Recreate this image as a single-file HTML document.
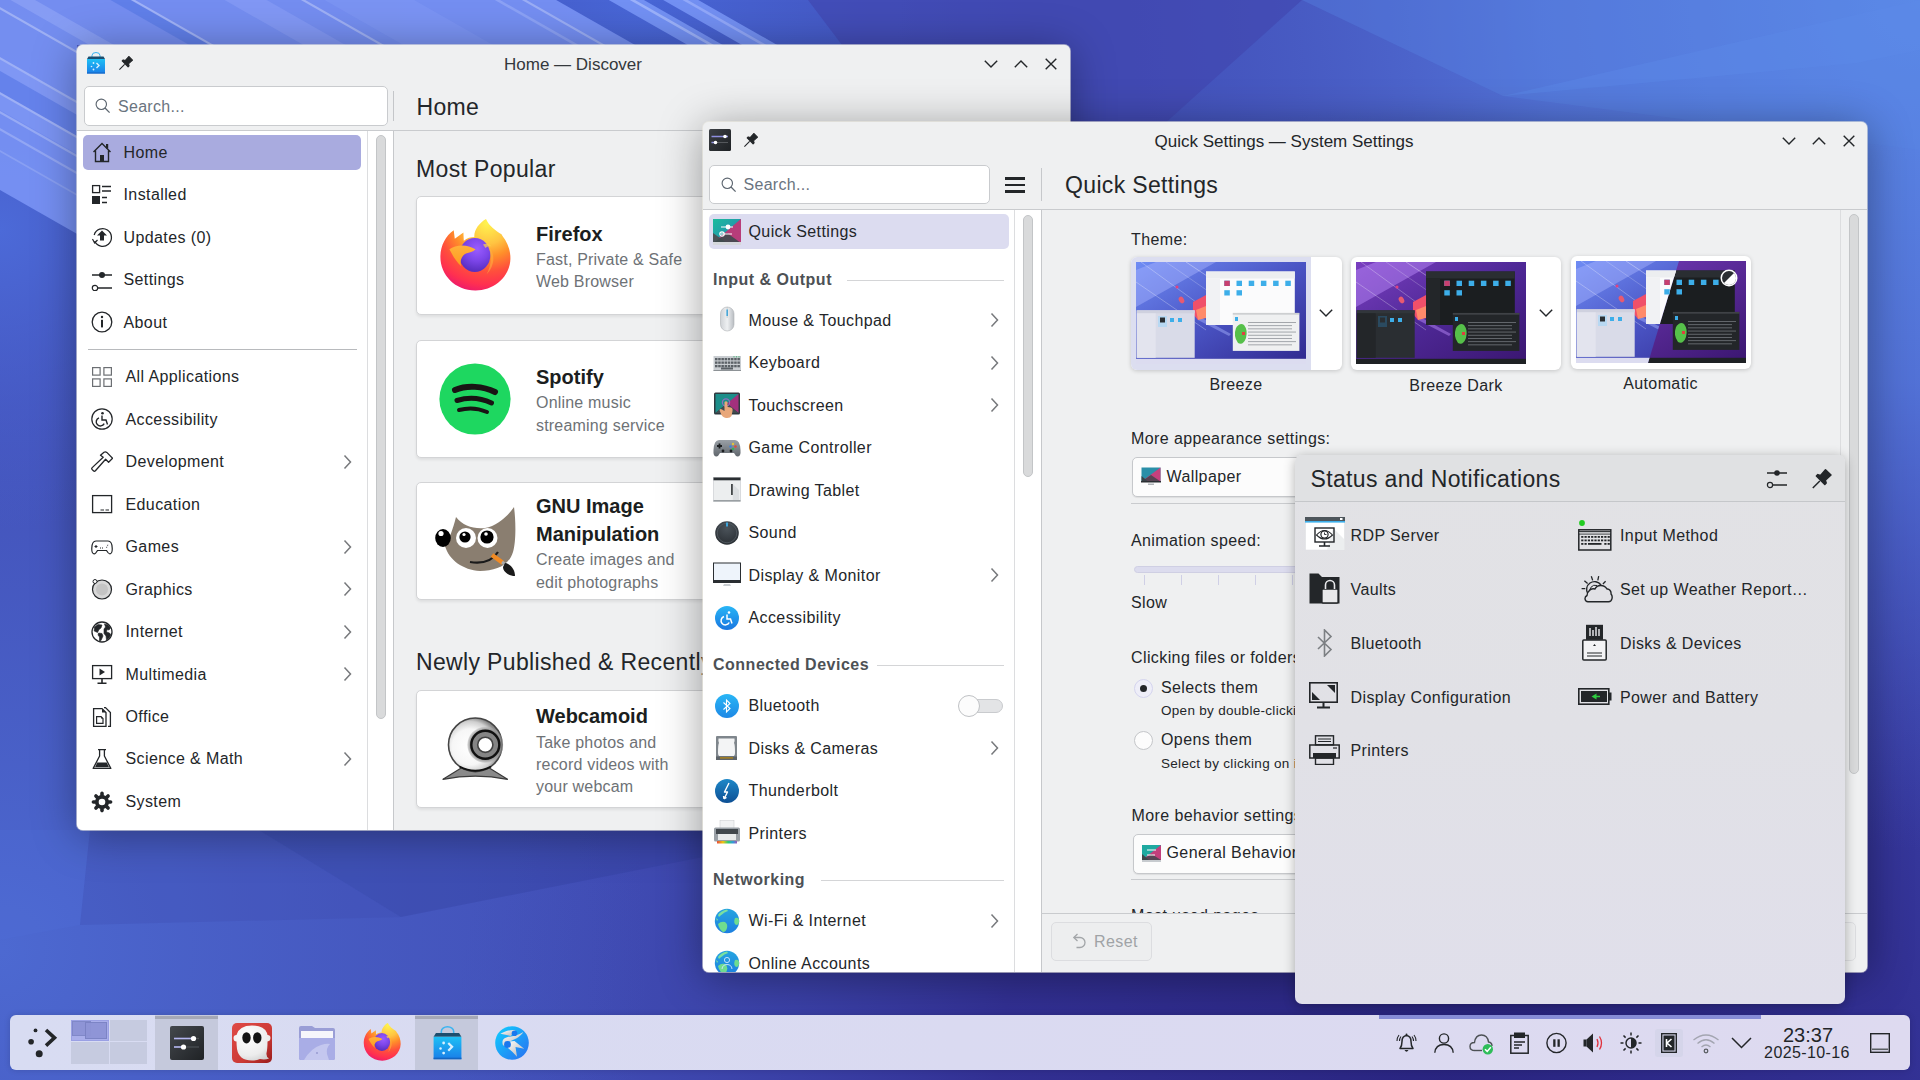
<!DOCTYPE html><html><head><meta charset="utf-8"><title>KDE</title><style>
*{box-sizing:border-box;margin:0;padding:0}
html,body{width:1920px;height:1080px;overflow:hidden}
body{position:relative;font-family:"Liberation Sans",sans-serif;color:#232629;background:#4a5cc8;-webkit-font-smoothing:antialiased}
.a{position:absolute}
.t{position:absolute;white-space:nowrap;line-height:1}
.clip{position:absolute;left:0;top:0;width:1920px;height:1080px}
</style></head><body>
<svg class="a" style="left:0;top:0" width="1920" height="1080" viewBox="0 0 1920 1080">
<defs>
<radialGradient id="wml" cx="0" cy="230" r="300" gradientUnits="userSpaceOnUse"><stop offset="0" stop-color="#4c6ad8"/><stop offset="1" stop-color="#4a62d0" stop-opacity="0"/></radialGradient>
<radialGradient id="wtm" cx="640" cy="0" r="420" gradientUnits="userSpaceOnUse"><stop offset="0" stop-color="#4866d6"/><stop offset="1" stop-color="#4660d0" stop-opacity="0"/></radialGradient>
<radialGradient id="wtr" cx="1920" cy="0" r="850" gradientUnits="userSpaceOnUse">
<stop offset="0" stop-color="#5c8ae8"/><stop offset="0.45" stop-color="#5578dc" stop-opacity="0.85"/><stop offset="1" stop-color="#4a5cc8" stop-opacity="0"/></radialGradient>
<radialGradient id="wbr" cx="1450" cy="1100" r="1000" gradientUnits="userSpaceOnUse">
<stop offset="0" stop-color="#29247f"/><stop offset="0.45" stop-color="#302c8e" stop-opacity="0.9"/><stop offset="1" stop-color="#3a3ea6" stop-opacity="0"/></radialGradient>
<radialGradient id="wbl" cx="0" cy="950" r="650" gradientUnits="userSpaceOnUse">
<stop offset="0" stop-color="#4e6cd4" stop-opacity="0.9"/><stop offset="1" stop-color="#4a62c8" stop-opacity="0"/></radialGradient>
<clipPath id="wclip"><polygon points="0,0 808,0 842,45 77,45 77,300 0,300"/></clipPath>
</defs>
<rect width="1920" height="1080" fill="#4250b8"/>
<rect width="1920" height="1080" fill="url(#wbr)"/>
<rect width="1920" height="1080" fill="url(#wtr)"/>
<rect width="1920" height="1080" fill="url(#wbl)"/>
<rect width="1920" height="1080" fill="url(#wml)"/>
<rect width="1920" height="1080" fill="url(#wtm)"/>
<polygon points="780,0 1302,0 1163,125 1069,125 1069,45 842,45 808,0" fill="#4145ae" opacity="0.6"/><polygon points="1302,0 1920,0 1920,150 1503,96" fill="#5a86e4" opacity="0.35"/>
<polygon points="1503,96 1920,0 1920,50 1857,63" fill="#5c8ae8" opacity="0.4"/>
<polygon points="90,830 259,830 401,917 80,925" fill="#3a48ac" opacity="0.25"/><polygon points="259,830 703,830 703,857 401,917" fill="#2f3a98" opacity="0.3"/><polygon points="0,830 90,830 80,925 0,940" fill="#4e6cd8" opacity="0.3"/>
<g clip-path="url(#wclip)"><polygon points="-100,-374.0 1300,424.0 1300,931.0 -100,133.0" fill="#7892f4" opacity="0.92"/><polygon points="-100,-50.0 1300,748.0 1300,750.5 -100,-47.5" fill="#ffffff" opacity="0.3"/><polygon points="-100,-77.0 1300,721.0 1300,735.0 -100,-63.0" fill="#b0c0ff" opacity="0.3"/><polygon points="-100,-132.0 1300,666.0 1300,678.0 -100,-120.0" fill="#4a6ee0" opacity="0.45"/><polygon points="-100,-134.0 1300,664.0 1300,666.5 -100,-131.5" fill="#d8e0ff" opacity="0.45"/><polygon points="-100,-209.0 1300,589.0 1300,613.0 -100,-185.0" fill="#a8b8ff" opacity="0.25"/><polygon points="-100,-231.0 1300,567.0 1300,569.5 -100,-228.5" fill="#ffffff" opacity="0.3"/><polygon points="-100,-293.0 1300,505.0 1300,556.0 -100,-242.0" fill="#a0b4ff" opacity="0.15"/><polygon points="-100,-357.0 1300,441.0 1300,443.5 -100,-354.5" fill="#ffffff" opacity="0.28"/><polygon points="-100,-342.0 1300,456.0 1300,459.0 -100,-339.0" fill="#c0ccff" opacity="0.3"/><polygon points="-100,-424.0 1300,374.0 1300,394.0 -100,-404.0" fill="#7a98f8" opacity="0.85"/><polygon points="-100,-419.0 1300,379.0 1300,382.0 -100,-416.0" fill="#b8c8ff" opacity="0.6"/><polygon points="-100,-455.0 1300,343.0 1300,363.0 -100,-435.0" fill="#7a98f8" opacity="0.85"/><polygon points="-100,-449.0 1300,349.0 1300,352.0 -100,-446.0" fill="#b0c0ff" opacity="0.5"/><polygon points="-100,0.0 1300,798.0 1300,800.5 -100,2.5" fill="#ffffff" opacity="0.3"/><polygon points="-100,2.0 1300,800.0 1300,812.0 -100,14.0" fill="#a0b4ff" opacity="0.25"/><polygon points="-100,14.0 1300,812.0 1300,833.0 -100,35.0" fill="#4a6ee0" opacity="0.35"/><polygon points="-100,35.0 1300,833.0 1300,835.5 -100,37.5" fill="#ffffff" opacity="0.3"/><polygon points="-100,37.0 1300,835.0 1300,851.0 -100,53.0" fill="#9ab0ff" opacity="0.2"/><polygon points="-100,54.0 1300,852.0 1300,854.5 -100,56.5" fill="#ffffff" opacity="0.25"/><polygon points="-100,71.0 1300,869.0 1300,871.5 -100,73.5" fill="#ffffff" opacity="0.22"/><polygon points="-100,93.0 1300,891.0 1300,893.0 -100,95.0" fill="#ffffff" opacity="0.15"/></g>
</svg>
<div class="a" style="left:77px;top:45px;width:993px;height:785px;border-radius:6px;box-shadow:0 0 0 1px rgba(240,238,228,.55),0 5px 44px rgba(0,0,0,.36);background:#eff0f1"></div><div class="clip" style="clip-path:inset(45px 850px 250px 77px round 6px)"><div class="a" style="left:77px;top:45px;width:993px;height:785px;background:#eff0f1"></div><svg class="a" style="left:86px;top:52px;" width="20" height="22" viewBox="0 0 20 22"><defs><linearGradient id="dg" x1="0" y1="0" x2="0" y2="1"><stop offset="0" stop-color="#1ec0f5"/><stop offset="1" stop-color="#1a7ee8"/></linearGradient></defs>
<path d="M6 6 V3.5 A4 3 0 0 1 14 3.5 V6" fill="none" stroke="#3db4f0" stroke-width="1"/>
<path d="M2.5 4.5 H17.5 L19 7 H1 Z" fill="#1d4e6e"/>
<rect x="1" y="7" width="18" height="14.5" fill="url(#dg)"/><rect x="1" y="20.5" width="18" height="1" fill="#1565c0"/>
<path d="M10.5 11 L13 13.5 L10.5 16" fill="none" stroke="#d8f0ff" stroke-width="1.4"/><circle cx="7.5" cy="11" r="0.9" fill="#d8f0ff"/><circle cx="5.5" cy="14.5" r="0.8" fill="#d8f0ff"/><circle cx="7.5" cy="17.5" r="0.9" fill="#d8f0ff"/></svg><svg class="a" style="left:119px;top:56px;" width="14" height="14" viewBox="0 0 14 14"><path d="M13.5 4.2 L9.8 0.5 L6.2 4.6 L4.2 3.9 L3.2 4.9 L9.1 10.8 L10.1 9.8 L9.4 7.8 Z M5.6 8.4 L0.4 13.6" fill="#232629" stroke="#232629" stroke-width="1.1" stroke-linejoin="round"/></svg><div class="t" style="left:73.0px;width:1000px;text-align:center;top:56.0px;font-size:17px;color:#34383c;font-weight:400;">Home — Discover</div><svg class="a" style="left:984px;top:59.5px;" width="14" height="8" viewBox="0 0 14 8"><path d="M0.8 0.8 L7 7 L13.2 0.8" fill="none" stroke="#232629" stroke-width="1.4"/></svg><svg class="a" style="left:1014px;top:59.5px;" width="14" height="8" viewBox="0 0 14 8"><path d="M0.8 7.2 L7 1 L13.2 7.2" fill="none" stroke="#232629" stroke-width="1.4"/></svg><svg class="a" style="left:1045px;top:57.5px;" width="12" height="12" viewBox="0 0 12 12"><path d="M0.7 0.7 L11.3 11.3 M11.3 0.7 L0.7 11.3" fill="none" stroke="#232629" stroke-width="1.4"/></svg><div class="a" style="left:83.5px;top:86px;width:304.5px;height:40px;background:#fff;border:1px solid #c9cbce;border-radius:5px"></div><svg class="a" style="left:95px;top:98.0px;" width="16" height="16" viewBox="0 0 16 16"><circle cx="6.3" cy="6.3" r="5.2" fill="none" stroke="#5d6670" stroke-width="1.15"/><path d="M10 10 L14.6 14.6" stroke="#5d6670" stroke-width="1.3"/></svg><div class="t" style="left:118.0px;top:99.4px;font-size:16px;color:#6a7480;font-weight:400;letter-spacing:0.3px;">Search...</div><div class="a" style="left:393px;top:91px;width:1px;height:30px;background:#c4c6c9"></div><div class="t" style="left:416.5px;top:95.5px;font-size:23px;color:#232629;font-weight:400;letter-spacing:0.35px;">Home</div><div class="a" style="left:77px;top:130px;width:993px;height:1px;background:#c9cbce"></div><div class="a" style="left:77px;top:131px;width:316px;height:699px;background:#fff"></div><div class="a" style="left:367px;top:131px;width:1px;height:699px;background:#dcdddf"></div><div class="a" style="left:376px;top:135px;width:10px;height:584px;background:#d9dadb;border:1px solid #c3c5c7;border-radius:5px"></div><div class="a" style="left:393px;top:131px;width:1px;height:699px;background:#c6c8cb"></div><div class="a" style="left:83px;top:135px;width:278px;height:35px;background:#a9abdf;border-radius:5px"></div><svg class="a" style="left:91px;top:141.3px;" width="22" height="22" viewBox="0 0 22 22"><path d="M2.5 11 L11 2.5 L19.5 11 M4.5 9.5 V20.5 H17.5 V9.5" fill="none" stroke="#232629" stroke-width="1.4" stroke-linejoin="miter"/><rect x="9" y="14" width="4" height="6.5" fill="#232629"/><rect x="15" y="3" width="2.2" height="4.5" fill="#232629"/></svg><div class="t" style="left:123.5px;top:144.7px;font-size:16px;color:#232629;font-weight:400;letter-spacing:0.4px;">Home</div><svg class="a" style="left:91px;top:183.8px;" width="22" height="22" viewBox="0 0 22 22"><rect x="1.6" y="1.6" width="7" height="7" fill="none" stroke="#232629" stroke-width="1.3"/><rect x="1" y="12" width="8" height="8" fill="#232629"/><path d="M11 2.5 H20 M11 7 H20 M11 13.5 H16 M11 18.5 H16" stroke="#232629" stroke-width="1.3"/></svg><div class="t" style="left:123.5px;top:187.2px;font-size:16px;color:#232629;font-weight:400;letter-spacing:0.4px;">Installed</div><svg class="a" style="left:91px;top:226.3px;" width="22" height="22" viewBox="0 0 22 22"><path d="M3.2 9 A8.8 8.8 0 1 1 3.6 15" fill="none" stroke="#232629" stroke-width="1.3"/><path d="M1.5 13 L3.6 17 L6.5 14" fill="none" stroke="#232629" stroke-width="1.2"/><path d="M11 4.5 L16 9.5 H13 V14.5 H9 V9.5 H6 Z" fill="#232629"/></svg><div class="t" style="left:123.5px;top:229.7px;font-size:16px;color:#232629;font-weight:400;letter-spacing:0.4px;">Updates (0)</div><svg class="a" style="left:91px;top:268.8px;" width="22" height="22" viewBox="0 0 22 22"><path d="M1 6 H21 M6 19 H21" stroke="#232629" stroke-width="1.4"/><circle cx="11" cy="6" r="3" fill="#232629"/><circle cx="4" cy="19" r="2.7" fill="#fff" stroke="#232629" stroke-width="1.2"/></svg><div class="t" style="left:123.5px;top:272.2px;font-size:16px;color:#232629;font-weight:400;letter-spacing:0.4px;">Settings</div><svg class="a" style="left:91px;top:311.3px;" width="22" height="22" viewBox="0 0 22 22"><circle cx="11" cy="11" r="9.8" fill="none" stroke="#232629" stroke-width="1.3"/><circle cx="11" cy="6" r="1.2" fill="#232629"/><rect x="10" y="8.8" width="2" height="7.6" fill="#232629"/></svg><div class="t" style="left:123.5px;top:314.7px;font-size:16px;color:#232629;font-weight:400;letter-spacing:0.4px;">About</div><div class="a" style="left:88px;top:349px;width:269px;height:1px;background:#b8babd"></div><svg class="a" style="left:91px;top:366.0px;" width="22" height="22" viewBox="0 0 22 22"><rect x="1.6" y="1.6" width="7.5" height="7.5" fill="none" stroke="#6c6f73" stroke-width="1.2"/><rect x="12.9" y="1.6" width="7.5" height="7.5" fill="none" stroke="#6c6f73" stroke-width="1.2"/><rect x="1.6" y="12.9" width="7.5" height="7.5" fill="none" stroke="#6c6f73" stroke-width="1.2"/><rect x="12.9" y="12.9" width="7.5" height="7.5" fill="none" stroke="#6c6f73" stroke-width="1.2"/></svg><div class="t" style="left:125.5px;top:369.4px;font-size:16px;color:#232629;font-weight:400;letter-spacing:0.4px;">All Applications</div><svg class="a" style="left:91px;top:408.45px;" width="22" height="22" viewBox="0 0 22 22"><circle cx="11" cy="11" r="10.2" fill="none" stroke="#232629" stroke-width="1.2"/><circle cx="11.5" cy="5.2" r="1.3" fill="#232629"/><path d="M11 7.5 V12 H15 L16.5 16.5 M8 9.8 A4.2 4.2 0 1 0 13.2 15.6" fill="none" stroke="#232629" stroke-width="1.4"/></svg><div class="t" style="left:125.5px;top:411.8px;font-size:16px;color:#232629;font-weight:400;letter-spacing:0.4px;">Accessibility</div><svg class="a" style="left:91px;top:450.9px;" width="22" height="22" viewBox="0 0 22 22"><path d="M9.5 4.2 L13 1.2 Q14.5 0.3 15.8 1.4 L21.6 7.2 L17.6 11.2 L14.6 8.2 L4.4 19.8 Q3.4 20.8 2.4 19.8 L1.2 18.6 Q0.2 17.6 1.2 16.6 L12.2 6.2 Z" fill="none" stroke="#232629" stroke-width="1.3" stroke-linejoin="round"/></svg><div class="t" style="left:125.5px;top:454.3px;font-size:16px;color:#232629;font-weight:400;letter-spacing:0.4px;">Development</div><svg class="a" style="left:342px;top:453.9px;" width="10" height="16" viewBox="0 0 10 16"><path d="M2.5 1.5 L8.5 8 L2.5 14.5" fill="none" stroke="#77797c" stroke-width="1.5"/></svg><svg class="a" style="left:91px;top:493.35px;" width="22" height="22" viewBox="0 0 22 22"><rect x="1.6" y="2.6" width="19" height="17" fill="none" stroke="#232629" stroke-width="1.3"/><path d="M9.5 17 H13 M14.5 17 H18" stroke="#232629" stroke-width="1.2"/></svg><div class="t" style="left:125.5px;top:496.8px;font-size:16px;color:#232629;font-weight:400;letter-spacing:0.4px;">Education</div><svg class="a" style="left:91px;top:535.8px;" width="22" height="22" viewBox="0 0 22 22"><path d="M5 5 H17 Q21 5 21.2 12 Q21.5 17.5 19 17.8 Q17.5 18 15.5 14.5 H6.5 Q4.5 18 3 17.8 Q0.5 17.5 0.8 12 Q1 5 5 5 Z" fill="none" stroke="#232629" stroke-width="1.2"/><path d="M5 9 V12 M3.5 10.5 H6.5 M16.5 9 L17 9.5 M15.5 11 L16 11.5" stroke="#232629" stroke-width="1.1"/><path d="M9 12 H13" stroke="#232629" stroke-width="1" stroke-dasharray="1 1"/></svg><div class="t" style="left:125.5px;top:539.2px;font-size:16px;color:#232629;font-weight:400;letter-spacing:0.4px;">Games</div><svg class="a" style="left:342px;top:538.8px;" width="10" height="16" viewBox="0 0 10 16"><path d="M2.5 1.5 L8.5 8 L2.5 14.5" fill="none" stroke="#77797c" stroke-width="1.5"/></svg><svg class="a" style="left:91px;top:578.25px;" width="22" height="22" viewBox="0 0 22 22"><circle cx="11" cy="11.5" r="9.5" fill="#d8d8d8" stroke="#232629" stroke-width="1.2"/><circle cx="11" cy="11.5" r="6" fill="#c4c4c4"/><circle cx="4" cy="3.5" r="2" fill="#fff" stroke="#232629" stroke-width="1"/></svg><div class="t" style="left:125.5px;top:581.6px;font-size:16px;color:#232629;font-weight:400;letter-spacing:0.4px;">Graphics</div><svg class="a" style="left:342px;top:581.25px;" width="10" height="16" viewBox="0 0 10 16"><path d="M2.5 1.5 L8.5 8 L2.5 14.5" fill="none" stroke="#77797c" stroke-width="1.5"/></svg><svg class="a" style="left:91px;top:620.7px;" width="22" height="22" viewBox="0 0 22 22"><circle cx="11" cy="11" r="10" fill="#fff" stroke="#232629" stroke-width="1.3"/><path d="M3.5 6 L7 3.5 L11 4 L10 7 L8 8.5 L6.5 11.5 L3.2 10 Z M7.5 12 L11 12.5 L12 15 L10 19.5 L8.5 20 L8.5 16 L7 14 Z M13.5 3 L17 4 L19.5 7 L18 9 L16 8.5 L15.5 11 L18.5 12 L20 14 L18 17 L15.5 19 L15 15 L13 12.5 L13 8 L14.5 6 Z" fill="#232629" stroke="#232629" stroke-width="0.6" stroke-linejoin="round"/></svg><div class="t" style="left:125.5px;top:624.1px;font-size:16px;color:#232629;font-weight:400;letter-spacing:0.4px;">Internet</div><svg class="a" style="left:342px;top:623.7px;" width="10" height="16" viewBox="0 0 10 16"><path d="M2.5 1.5 L8.5 8 L2.5 14.5" fill="none" stroke="#77797c" stroke-width="1.5"/></svg><svg class="a" style="left:91px;top:663.1500000000001px;" width="22" height="22" viewBox="0 0 22 22"><rect x="1.6" y="2.6" width="19" height="13" fill="none" stroke="#232629" stroke-width="1.3"/><path d="M8.5 5.5 L14 9 L8.5 12.5 Z" fill="#232629"/><path d="M11 16 V19.5 M6.5 20.3 H15.5" stroke="#232629" stroke-width="1.6"/></svg><div class="t" style="left:125.5px;top:666.6px;font-size:16px;color:#232629;font-weight:400;letter-spacing:0.4px;">Multimedia</div><svg class="a" style="left:342px;top:666.1500000000001px;" width="10" height="16" viewBox="0 0 10 16"><path d="M2.5 1.5 L8.5 8 L2.5 14.5" fill="none" stroke="#77797c" stroke-width="1.5"/></svg><svg class="a" style="left:91px;top:705.6px;" width="22" height="22" viewBox="0 0 22 22"><path d="M2.6 2.6 H11 L15 6.6 V20.4 H2.6 Z" fill="none" stroke="#232629" stroke-width="1.3"/><path d="M11 2.6 V6.6 H15 Z" fill="#232629"/><path d="M13 1.6 H14.5 L19.4 6.5 V20.4 H17" fill="none" stroke="#232629" stroke-width="1.3"/><path d="M5.6 10.6 H10 L12 12.6 V17.4 H5.6 Z" fill="none" stroke="#232629" stroke-width="1.2"/><path d="M10 10.6 V12.6 H12 Z" fill="#232629"/></svg><div class="t" style="left:125.5px;top:709.0px;font-size:16px;color:#232629;font-weight:400;letter-spacing:0.4px;">Office</div><svg class="a" style="left:91px;top:748.05px;" width="22" height="22" viewBox="0 0 22 22"><path d="M7 1.6 H15 M8.6 1.6 V8 L2.2 20.4 H19.8 L13.4 8 V1.6" fill="none" stroke="#232629" stroke-width="1.3" stroke-linejoin="round"/><path d="M6.2 14.5 H15.8 L18 19.3 H4 Z" fill="#232629"/></svg><div class="t" style="left:125.5px;top:751.4px;font-size:16px;color:#232629;font-weight:400;letter-spacing:0.4px;">Science &amp; Math</div><svg class="a" style="left:342px;top:751.05px;" width="10" height="16" viewBox="0 0 10 16"><path d="M2.5 1.5 L8.5 8 L2.5 14.5" fill="none" stroke="#77797c" stroke-width="1.5"/></svg><svg class="a" style="left:91px;top:790.5px;" width="22" height="22" viewBox="0 0 22 22"><circle cx="11" cy="11" r="7" fill="#232629"/><line x1="11" y1="11" x2="11.00" y2="2.40" stroke="#232629" stroke-width="3.6" stroke-linecap="round"/><line x1="11" y1="11" x2="17.08" y2="4.92" stroke="#232629" stroke-width="3.6" stroke-linecap="round"/><line x1="11" y1="11" x2="19.60" y2="11.00" stroke="#232629" stroke-width="3.6" stroke-linecap="round"/><line x1="11" y1="11" x2="17.08" y2="17.08" stroke="#232629" stroke-width="3.6" stroke-linecap="round"/><line x1="11" y1="11" x2="11.00" y2="19.60" stroke="#232629" stroke-width="3.6" stroke-linecap="round"/><line x1="11" y1="11" x2="4.92" y2="17.08" stroke="#232629" stroke-width="3.6" stroke-linecap="round"/><line x1="11" y1="11" x2="2.40" y2="11.00" stroke="#232629" stroke-width="3.6" stroke-linecap="round"/><line x1="11" y1="11" x2="4.92" y2="4.92" stroke="#232629" stroke-width="3.6" stroke-linecap="round"/><circle cx="11" cy="11" r="3.3" fill="#fff"/></svg><div class="t" style="left:125.5px;top:793.9px;font-size:16px;color:#232629;font-weight:400;letter-spacing:0.4px;">System</div><div class="t" style="left:416.0px;top:157.6px;font-size:23px;color:#232629;font-weight:400;letter-spacing:0.35px;">Most Popular</div><div class="a" style="left:416px;top:196px;width:400px;height:119px;background:#fff;border:1px solid #d3d4d6;border-radius:5px;box-shadow:0 2px 3px rgba(0,0,0,.07)"></div><div class="t" style="left:536.0px;top:223.8px;font-size:20px;color:#1b1e20;font-weight:700;">Firefox</div><div class="t" style="left:536.0px;top:252.0px;font-size:16px;color:#6e7276;font-weight:400;letter-spacing:0.2px;">Fast, Private &amp; Safe</div><div class="t" style="left:536.0px;top:274.0px;font-size:16px;color:#6e7276;font-weight:400;letter-spacing:0.2px;">Web Browser</div><div class="a" style="left:416px;top:340px;width:400px;height:118px;background:#fff;border:1px solid #d3d4d6;border-radius:5px;box-shadow:0 2px 3px rgba(0,0,0,.07)"></div><div class="t" style="left:536.0px;top:366.7px;font-size:20px;color:#1b1e20;font-weight:700;">Spotify</div><div class="t" style="left:536.0px;top:395.3px;font-size:16px;color:#6e7276;font-weight:400;letter-spacing:0.2px;">Online music</div><div class="t" style="left:536.0px;top:417.8px;font-size:16px;color:#6e7276;font-weight:400;letter-spacing:0.2px;">streaming service</div><div class="a" style="left:416px;top:482px;width:400px;height:118px;background:#fff;border:1px solid #d3d4d6;border-radius:5px;box-shadow:0 2px 3px rgba(0,0,0,.07)"></div><div class="t" style="left:536.0px;top:496.3px;font-size:20px;color:#1b1e20;font-weight:700;">GNU Image</div><div class="t" style="left:536.0px;top:523.6px;font-size:20px;color:#1b1e20;font-weight:700;">Manipulation</div><div class="t" style="left:536.0px;top:552.3px;font-size:16px;color:#6e7276;font-weight:400;letter-spacing:0.2px;">Create images and</div><div class="t" style="left:536.0px;top:574.7px;font-size:16px;color:#6e7276;font-weight:400;letter-spacing:0.2px;">edit photographs</div><div class="a" style="left:416px;top:690px;width:400px;height:118px;background:#fff;border:1px solid #d3d4d6;border-radius:5px;box-shadow:0 2px 3px rgba(0,0,0,.07)"></div><div class="t" style="left:536.0px;top:705.5px;font-size:20px;color:#1b1e20;font-weight:700;">Webcamoid</div><div class="t" style="left:536.0px;top:734.6px;font-size:16px;color:#6e7276;font-weight:400;letter-spacing:0.2px;">Take photos and</div><div class="t" style="left:536.0px;top:756.6px;font-size:16px;color:#6e7276;font-weight:400;letter-spacing:0.2px;">record videos with</div><div class="t" style="left:536.0px;top:778.6px;font-size:16px;color:#6e7276;font-weight:400;letter-spacing:0.2px;">your webcam</div><svg class="a" style="left:439px;top:219px;" width="72" height="72" viewBox="0 0 72 72"><defs>
<radialGradient id="ffo1" cx="48" cy="4" r="75" gradientUnits="userSpaceOnUse"><stop offset="0" stop-color="#fff44f"/><stop offset="0.28" stop-color="#ffc442"/><stop offset="0.45" stop-color="#ff8f2a"/><stop offset="0.65" stop-color="#ff4f3c"/><stop offset="0.82" stop-color="#ff3050"/><stop offset="1" stop-color="#e3107a"/></radialGradient>
<radialGradient id="ffp1" cx="38" cy="30" r="22" gradientUnits="userSpaceOnUse"><stop offset="0" stop-color="#9a5cff"/><stop offset="0.55" stop-color="#7b45e8"/><stop offset="1" stop-color="#5a2fc0"/></radialGradient>
<linearGradient id="fff1" x1="0" y1="0" x2="0" y2="1"><stop offset="0" stop-color="#ffb13a"/><stop offset="1" stop-color="#ff9a1f"/></linearGradient>
</defs>
<path d="M14.7 11.3 L15.8 19.8 L24.4 13.6 L24.8 21.8 C28 19 32 18 35.3 18 C35 11 40 4 47 0 C50 7 57 12 62.5 15.2 L63.5 17 C69 24 71.6 32 71.4 40 C70.8 58 55 71.5 36.5 71.5 C16 71.5 1.4 56 1.4 38 C1.4 27 6.5 17 14.7 11.3 Z" fill="url(#ffo1)"/>
<ellipse cx="35.8" cy="36" rx="15.6" ry="17" fill="url(#ffp1)"/>
<path d="M48.5 27 C56 32 57 46 47.5 55.5 C53 45 53 34 48.5 27 Z" fill="#ffb341" opacity="0.55"/>
<path d="M44 25.5 C47 24 51 25 52.5 27.5 C50 27 48 27.5 46.5 29 Z" fill="#ffd04a" opacity="0.7"/>
<path d="M10.4 30.3 C15 26.5 24 25.5 30 27.5 C33 28.5 35 29.5 36.6 30.3 C34 33 30.5 33.6 27 34.6 C22 37 20.5 43 22.5 47.5 C16.5 42 13.5 36 10.4 30.3 Z" fill="url(#fff1)"/></svg><svg class="a" style="left:439px;top:363px;" width="72" height="72" viewBox="0 0 72 72"><circle cx="36" cy="36" r="35.6" fill="#1ed760"/>
<path d="M16 27 C28 22 44 23 56 29" fill="none" stroke="#191414" stroke-width="6" stroke-linecap="round"/>
<path d="M18 37.5 C29 34 42 35 52.5 40" fill="none" stroke="#191414" stroke-width="5" stroke-linecap="round"/>
<path d="M20 47 C29 44.5 39 45 48 49" fill="none" stroke="#191414" stroke-width="4" stroke-linecap="round"/></svg><svg class="a" style="left:433px;top:504px;" width="86" height="74" viewBox="0 0 86 74"><path d="M23 13 C30 22 40 25 52 24 C64 22 75 12 81 3 C83 18 83 38 80 48 C76 62 62 67 47 67 C30 66 16 56 12 42 C16 36 20 25 23 13 Z" fill="#8a7e70"/>
<ellipse cx="10" cy="34" rx="7.8" ry="9" fill="#000"/><circle cx="8" cy="29.5" r="2.6" fill="#fff"/>
<circle cx="33" cy="34" r="10" fill="#fff"/><circle cx="32" cy="33" r="5.6" fill="#000"/><circle cx="31" cy="30.5" r="1.6" fill="#fff"/>
<circle cx="54.5" cy="34" r="10" fill="#fff"/><circle cx="54" cy="33" r="6.6" fill="#000"/><circle cx="53" cy="30" r="1.8" fill="#fff"/>
<path d="M37 58 C50 60 60 56 65 48" fill="none" stroke="#1a1a1a" stroke-width="2.2"/>
<path d="M59 51 L70 59" stroke="#f08a24" stroke-width="4.5"/><path d="M69 58 L73 61" stroke="#aaa" stroke-width="3"/><path d="M72 59 C78 60 82 66 82 72 C76 72 70 68 70 63 Z" fill="#1a1a1a"/></svg><svg class="a" style="left:440px;top:715px;" width="72" height="70" viewBox="0 0 72 70"><defs><radialGradient id="wcg" cx="30" cy="32" r="30" gradientUnits="userSpaceOnUse"><stop offset="0" stop-color="#ffffff"/><stop offset="0.6" stop-color="#f6f6f6"/><stop offset="0.85" stop-color="#cfcfcf"/><stop offset="1" stop-color="#8a8a8a"/></radialGradient>
<radialGradient id="wcs" cx="45" cy="30" r="22" gradientUnits="userSpaceOnUse"><stop offset="0.6" stop-color="#555" stop-opacity="0.9"/><stop offset="1" stop-color="#fff" stop-opacity="0"/></radialGradient></defs>
<path d="M3 64.3 L22 52.5 Q35.3 58 48.5 52.5 L67.5 64.3 Q35.3 58 3 64.3 Z" fill="#8a8a8a" stroke="#3a3a3a" stroke-width="1.2" stroke-linejoin="round"/>
<circle cx="35.3" cy="29.8" r="26.8" fill="url(#wcg)" stroke="#444" stroke-width="1.6"/>
<circle cx="45.3" cy="29.8" r="18" fill="url(#wcs)"/>
<circle cx="45.3" cy="29.8" r="14" fill="#858585" stroke="#111" stroke-width="2.4"/>
<circle cx="45.3" cy="29.8" r="7.6" fill="#fff" stroke="#444" stroke-width="1.6"/>
<path d="M19.5 51.5 Q35.3 60 51 51.5" fill="none" stroke="#111" stroke-width="1.8"/></svg><div class="t" style="left:416.0px;top:650.9px;font-size:23px;color:#232629;font-weight:400;letter-spacing:0.35px;">Newly Published &amp; Recently Updated</div></div>
<div class="a" style="left:703px;top:122px;width:1164px;height:850px;border-radius:6px;box-shadow:0 0 0 1px rgba(240,238,228,.55),0 5px 44px rgba(0,0,0,.38);background:#eff0f1"></div><div class="clip" style="clip-path:inset(122px 53px 108px 703px round 6px)"><div class="a" style="left:703px;top:122px;width:1164px;height:850px;background:#eff0f1"></div><svg class="a" style="left:709px;top:129px;" width="22" height="22" viewBox="0 0 22 22"><defs><linearGradient id="sai" x1="0" y1="0" x2="1" y2="1"><stop offset="0" stop-color="#3b3f44"/><stop offset="1" stop-color="#1e2124"/></linearGradient></defs>
<rect x="0" y="0" width="22" height="22" rx="1.5" fill="url(#sai)"/>
<path d="M2.5 7.5 H19" stroke="#8e8fe0" stroke-width="1.3"/><path d="M2.5 13.5 H19" stroke="#55585c" stroke-width="1.2"/><path d="M2.5 13.5 H7" stroke="#8e8fe0" stroke-width="1.3"/>
<circle cx="16" cy="7.5" r="1.8" fill="#fff"/><circle cx="6.5" cy="13.5" r="1.8" fill="#fff"/></svg><svg class="a" style="left:744px;top:133px;" width="14" height="14" viewBox="0 0 14 14"><path d="M13.5 4.2 L9.8 0.5 L6.2 4.6 L4.2 3.9 L3.2 4.9 L9.1 10.8 L10.1 9.8 L9.4 7.8 Z M5.6 8.4 L0.4 13.6" fill="#232629" stroke="#232629" stroke-width="1.1" stroke-linejoin="round"/></svg><div class="t" style="left:784.0px;width:1000px;text-align:center;top:133.1px;font-size:17px;color:#232629;font-weight:400;">Quick Settings — System Settings</div><svg class="a" style="left:1781.6px;top:136.5px;" width="14" height="8" viewBox="0 0 14 8"><path d="M0.8 0.8 L7 7 L13.2 0.8" fill="none" stroke="#232629" stroke-width="1.4"/></svg><svg class="a" style="left:1811.6px;top:136.5px;" width="14" height="8" viewBox="0 0 14 8"><path d="M0.8 7.2 L7 1 L13.2 7.2" fill="none" stroke="#232629" stroke-width="1.4"/></svg><svg class="a" style="left:1842.6px;top:134.5px;" width="12" height="12" viewBox="0 0 12 12"><path d="M0.7 0.7 L11.3 11.3 M11.3 0.7 L0.7 11.3" fill="none" stroke="#232629" stroke-width="1.4"/></svg><div class="a" style="left:709px;top:165px;width:281px;height:39px;background:#fff;border:1px solid #c9cbce;border-radius:5px"></div><svg class="a" style="left:720.5px;top:176.5px;" width="16" height="16" viewBox="0 0 16 16"><circle cx="6.3" cy="6.3" r="5.2" fill="none" stroke="#5d6670" stroke-width="1.15"/><path d="M10 10 L14.6 14.6" stroke="#5d6670" stroke-width="1.3"/></svg><div class="t" style="left:743.5px;top:177.4px;font-size:16px;color:#6a7480;font-weight:400;letter-spacing:0.3px;">Search...</div><div class="a" style="left:1005px;top:177.3px;width:20px;height:2.6px;background:#232629"></div><div class="a" style="left:1005px;top:183.6px;width:20px;height:2.6px;background:#232629"></div><div class="a" style="left:1005px;top:190px;width:20px;height:2.6px;background:#232629"></div><div class="a" style="left:1041px;top:168px;width:1px;height:33px;background:#c6c8cb"></div><div class="t" style="left:1065.0px;top:173.9px;font-size:23px;color:#232629;font-weight:400;letter-spacing:0.35px;">Quick Settings</div><div class="a" style="left:703px;top:209px;width:1164px;height:1.3px;background:#c9cbce"></div><div class="a" style="left:703px;top:210px;width:338px;height:762px;background:#fff"></div><div class="a" style="left:1014px;top:210px;width:1px;height:762px;background:#dcdddf"></div><div class="a" style="left:1023px;top:215px;width:10px;height:262px;background:#d9dadb;border:1px solid #c3c5c7;border-radius:5px"></div><div class="a" style="left:1041px;top:210px;width:1px;height:762px;background:#c6c8cb"></div><div class="a" style="left:709px;top:214px;width:300px;height:35px;background:#dcdcf0;border-radius:5px"></div><svg class="a" style="left:713px;top:219px;" width="28" height="26" viewBox="0 0 28 26"><defs><linearGradient id="qsa" x1="0" y1="0" x2="1" y2="1"><stop offset="0" stop-color="#1abc9c"/><stop offset="1" stop-color="#2a7fb8"/></linearGradient></defs>
<rect x="0" y="0" width="28" height="24" fill="url(#qsa)"/>
<path d="M28 0 L28 24 L0 24 Z" fill="#c23b7a"/><path d="M28 0 L0 24 L28 24 Z" fill="#b0407a" opacity="0.6"/>
<path d="M0 14 L14 24 H0 Z" fill="#4a5257"/><path d="M0 24 L28 24 L14 14 Z" fill="#3f4a4e" opacity="0.9"/>
<rect x="0" y="23" width="28" height="3" fill="#d5d8dc"/>
<path d="M8 8 H20" stroke="#fff" stroke-width="1.2"/><circle cx="15" cy="8" r="2.4" fill="#fff"/>
<path d="M8 15 H19" stroke="#fff" stroke-width="1.2"/><circle cx="9" cy="15" r="2.2" fill="none" stroke="#fff" stroke-width="1.2"/></svg><div class="t" style="left:748.5px;top:224.0px;font-size:16px;color:#232629;font-weight:400;letter-spacing:0.4px;">Quick Settings</div><div class="t" style="left:713.0px;top:272.3px;font-size:16px;color:#4d5155;font-weight:700;letter-spacing:0.5px;">Input &amp; Output</div><div class="a" style="left:847px;top:279.5px;width:157px;height:1px;background:#d4d5d7"></div><svg class="a" style="left:713px;top:306.0px;" width="28" height="28" viewBox="0 0 28 28"><defs><linearGradient id="mg" x1="0" y1="0" x2="1" y2="0"><stop offset="0" stop-color="#cfd2d6"/><stop offset="0.5" stop-color="#eef0f2"/><stop offset="1" stop-color="#b8bcc1"/></linearGradient></defs>
<rect x="7.5" y="1" width="13.5" height="24" rx="6.7" fill="url(#mg)" stroke="#aeb2b6" stroke-width="0.6"/><path d="M14.2 3.5 V10" stroke="#3daee9" stroke-width="1.6"/><path d="M14.2 1 V12" stroke="#7f8c8d" stroke-width="0.5" opacity="0.6"/></svg><div class="t" style="left:748.5px;top:312.7px;font-size:16px;color:#232629;font-weight:400;letter-spacing:0.4px;">Mouse &amp; Touchpad</div><svg class="a" style="left:989px;top:312.0px;" width="10" height="16" viewBox="0 0 10 16"><path d="M2.5 1.5 L8.5 8 L2.5 14.5" fill="none" stroke="#77797c" stroke-width="1.5"/></svg><svg class="a" style="left:713px;top:348.5px;" width="28" height="28" viewBox="0 0 28 28"><rect x="0.5" y="7" width="27.5" height="15" fill="#c9cdd1"/><rect x="0.5" y="21" width="27.5" height="1" fill="#8d9296"/><rect x="2.0" y="9" width="2.5" height="2.3" fill="#5b6166"/><rect x="5.2" y="9" width="2.5" height="2.3" fill="#5b6166"/><rect x="8.4" y="9" width="2.5" height="2.3" fill="#5b6166"/><rect x="11.6" y="9" width="2.5" height="2.3" fill="#5b6166"/><rect x="14.8" y="9" width="2.5" height="2.3" fill="#5b6166"/><rect x="18.0" y="9" width="2.5" height="2.3" fill="#5b6166"/><rect x="21.2" y="9" width="2.5" height="2.3" fill="#5b6166"/><rect x="24.4" y="9" width="2.5" height="2.3" fill="#5b6166"/><rect x="2.0" y="12.5" width="2.5" height="2.3" fill="#5b6166"/><rect x="5.2" y="12.5" width="2.5" height="2.3" fill="#5b6166"/><rect x="8.4" y="12.5" width="2.5" height="2.3" fill="#5b6166"/><rect x="11.6" y="12.5" width="2.5" height="2.3" fill="#5b6166"/><rect x="14.8" y="12.5" width="2.5" height="2.3" fill="#5b6166"/><rect x="18.0" y="12.5" width="2.5" height="2.3" fill="#5b6166"/><rect x="21.2" y="12.5" width="2.5" height="2.3" fill="#5b6166"/><rect x="24.4" y="12.5" width="2.5" height="2.3" fill="#5b6166"/><rect x="2.0" y="16" width="2.5" height="2.3" fill="#5b6166"/><rect x="5.2" y="16" width="2.5" height="2.3" fill="#5b6166"/><rect x="8.4" y="16" width="2.5" height="2.3" fill="#5b6166"/><rect x="11.6" y="16" width="2.5" height="2.3" fill="#5b6166"/><rect x="14.8" y="16" width="2.5" height="2.3" fill="#5b6166"/><rect x="18.0" y="16" width="2.5" height="2.3" fill="#5b6166"/><rect x="21.2" y="16" width="2.5" height="2.3" fill="#5b6166"/><rect x="24.4" y="16" width="2.5" height="2.3" fill="#5b6166"/><rect x="8" y="18.5" width="12" height="2" fill="#5b6166"/><circle cx="21" cy="7.8" r="0.6" fill="#27ae60"/><circle cx="23.5" cy="7.8" r="0.6" fill="#27ae60"/><circle cx="26" cy="7.8" r="0.6" fill="#27ae60"/></svg><div class="t" style="left:748.5px;top:355.2px;font-size:16px;color:#232629;font-weight:400;letter-spacing:0.4px;">Keyboard</div><svg class="a" style="left:989px;top:354.5px;" width="10" height="16" viewBox="0 0 10 16"><path d="M2.5 1.5 L8.5 8 L2.5 14.5" fill="none" stroke="#77797c" stroke-width="1.5"/></svg><svg class="a" style="left:713px;top:391.0px;" width="28" height="28" viewBox="0 0 28 28"><rect x="1" y="1.5" width="26" height="22" rx="1.5" fill="#2f3a40"/>
<path d="M2.5 3 H25.5 V22 Z" fill="#a3307d"/><path d="M2.5 3 H25.5 L2.5 22 Z" fill="#1c8e8a"/><path d="M2.5 22 L14 12.5 L25.5 22 Z" fill="#424b50"/>
<circle cx="13" cy="11.5" r="3.6" fill="none" stroke="#8e6fbf" stroke-width="1.2"/>
<path d="M11.5 11 Q13 9.5 14.5 11 V16 L18 16.5 Q20 17 19.5 20 L18.5 25 Q17 27.5 13 27 Q9.5 26.5 8 23 L6.5 19 Q7 17.5 9 18.5 L11.5 20 Z" fill="#e8a77a"/></svg><div class="t" style="left:748.5px;top:397.7px;font-size:16px;color:#232629;font-weight:400;letter-spacing:0.4px;">Touchscreen</div><svg class="a" style="left:989px;top:397.0px;" width="10" height="16" viewBox="0 0 10 16"><path d="M2.5 1.5 L8.5 8 L2.5 14.5" fill="none" stroke="#77797c" stroke-width="1.5"/></svg><svg class="a" style="left:713px;top:433.5px;" width="28" height="28" viewBox="0 0 28 28"><defs><linearGradient id="gpg" x1="0" y1="0" x2="0" y2="1"><stop offset="0" stop-color="#9aa0a6"/><stop offset="1" stop-color="#60666c"/></linearGradient></defs>
<path d="M6 6 H22 Q27 6 27.5 16 Q28 22 25 22.5 Q23 23 21 19 H7 Q5 23 3 22.5 Q0 22 0.5 16 Q1 6 6 6 Z" fill="url(#gpg)"/>
<path d="M6.5 9.5 V14.5 M4 12 H9" stroke="#1b1e20" stroke-width="1.8"/>
<circle cx="20" cy="10" r="1.2" fill="#e2c43b"/><circle cx="22.5" cy="12.5" r="1.2" fill="#e04b3b"/><circle cx="17.5" cy="12.5" r="1.2" fill="#3b82e0"/><circle cx="20" cy="15" r="1.2" fill="#36b05b"/>
<circle cx="10" cy="17" r="1.4" fill="#1b1e20"/><circle cx="18" cy="17" r="1.4" fill="#1b1e20"/></svg><div class="t" style="left:748.5px;top:440.2px;font-size:16px;color:#232629;font-weight:400;letter-spacing:0.4px;">Game Controller</div><svg class="a" style="left:713px;top:476.0px;" width="28" height="28" viewBox="0 0 28 28"><rect x="0.5" y="1.5" width="27" height="24" fill="#eceeef" stroke="#c5c8cb" stroke-width="0.6"/><rect x="0.5" y="1.5" width="27" height="2.8" fill="#2a2e32"/><rect x="0.5" y="24" width="27" height="1.5" fill="#9a9fa3"/><path d="M19 8 V19" stroke="#1b1e20" stroke-width="1.6"/><path d="M19.8 8 L26 14 V24 H19.8 Z" fill="#dcdfe1"/></svg><div class="t" style="left:748.5px;top:482.7px;font-size:16px;color:#232629;font-weight:400;letter-spacing:0.4px;">Drawing Tablet</div><svg class="a" style="left:713px;top:518.5px;" width="28" height="28" viewBox="0 0 28 28"><defs><radialGradient id="sdg" cx="0.5" cy="0.3" r="0.7"><stop offset="0" stop-color="#4b535a"/><stop offset="1" stop-color="#2a2f34"/></radialGradient></defs>
<circle cx="14" cy="14" r="11.8" fill="url(#sdg)"/><circle cx="14" cy="14" r="9.8" fill="none" stroke="#555d64" stroke-width="0.8"/><path d="M14 3.5 V7.5" stroke="#3daee9" stroke-width="1.8"/></svg><div class="t" style="left:748.5px;top:525.2px;font-size:16px;color:#232629;font-weight:400;letter-spacing:0.4px;">Sound</div><svg class="a" style="left:713px;top:561.0px;" width="28" height="28" viewBox="0 0 28 28"><rect x="0.5" y="2" width="27" height="19" fill="#eef4fb" stroke="#2a2e32" stroke-width="1"/><rect x="0" y="19" width="28" height="3" fill="#2a2e32"/><path d="M11 23 H17 L18 25 H10 Z" fill="#c9cdd1"/></svg><div class="t" style="left:748.5px;top:567.7px;font-size:16px;color:#232629;font-weight:400;letter-spacing:0.4px;">Display &amp; Monitor</div><svg class="a" style="left:989px;top:567.0px;" width="10" height="16" viewBox="0 0 10 16"><path d="M2.5 1.5 L8.5 8 L2.5 14.5" fill="none" stroke="#77797c" stroke-width="1.5"/></svg><svg class="a" style="left:713px;top:603.5px;" width="28" height="28" viewBox="0 0 28 28"><defs><linearGradient id="c29b6f61976e0" x1="0" y1="0" x2="0" y2="1"><stop offset="0" stop-color="#29b6f6"/><stop offset="1" stop-color="#1976e0"/></linearGradient></defs>
<circle cx="14" cy="14" r="12" fill="url(#c29b6f61976e0)"/><circle cx="16" cy="8.5" r="1.3" fill="#fff"/><path d="M14 10.5 V15 H17.5 L19 19.5 M11 12.5 A4.3 4.3 0 1 0 16.2 18.5" fill="none" stroke="#fff" stroke-width="1.5"/></svg><div class="t" style="left:748.5px;top:610.2px;font-size:16px;color:#232629;font-weight:400;letter-spacing:0.4px;">Accessibility</div><div class="t" style="left:713.0px;top:657.2px;font-size:16px;color:#4d5155;font-weight:700;letter-spacing:0.5px;">Connected Devices</div><div class="a" style="left:877px;top:664.5px;width:127px;height:1px;background:#d4d5d7"></div><svg class="a" style="left:713px;top:691.5px;" width="28" height="28" viewBox="0 0 28 28"><defs><linearGradient id="c29b6f61e88e5" x1="0" y1="0" x2="0" y2="1"><stop offset="0" stop-color="#29b6f6"/><stop offset="1" stop-color="#1e88e5"/></linearGradient></defs>
<circle cx="14" cy="14" r="12" fill="url(#c29b6f61e88e5)"/><path d="M10.5 10.5 L17 16.5 L13.5 20 V8 L17 11.5 L10.5 17.5" fill="none" stroke="#fff" stroke-width="1.1"/></svg><div class="t" style="left:748.5px;top:698.2px;font-size:16px;color:#232629;font-weight:400;letter-spacing:0.4px;">Bluetooth</div><svg class="a" style="left:713px;top:734.0px;" width="28" height="28" viewBox="0 0 28 28"><rect x="3" y="2" width="21" height="24" rx="1" fill="#7f868c"/><path d="M5.5 4.5 H21.5 Q22 8 21 9 Q22 10 22 19 Q22 21 21 22 H6 Q5 21 5 19 Q5 10 6 9 Q5 8 5.5 4.5 Z" fill="#f3f4f5"/><rect x="3" y="22.5" width="21" height="3.5" fill="#5d6368"/><rect x="7" y="23.3" width="13" height="1.2" fill="#b8860b"/></svg><div class="t" style="left:748.5px;top:740.7px;font-size:16px;color:#232629;font-weight:400;letter-spacing:0.4px;">Disks &amp; Cameras</div><svg class="a" style="left:989px;top:740.0px;" width="10" height="16" viewBox="0 0 10 16"><path d="M2.5 1.5 L8.5 8 L2.5 14.5" fill="none" stroke="#77797c" stroke-width="1.5"/></svg><svg class="a" style="left:713px;top:776.5px;" width="28" height="28" viewBox="0 0 28 28"><defs><linearGradient id="c1e88c80d4f94" x1="0" y1="0" x2="0" y2="1"><stop offset="0" stop-color="#1e88c8"/><stop offset="1" stop-color="#0d4f94"/></linearGradient></defs>
<circle cx="14" cy="14" r="12" fill="url(#c1e88c80d4f94)"/><path d="M16 6 L11.5 15 H14.5 L11 22 M11 22 L10.5 19 M11 22 L13.5 20.5" fill="none" stroke="#fff" stroke-width="1.4" stroke-linejoin="round"/></svg><div class="t" style="left:748.5px;top:783.2px;font-size:16px;color:#232629;font-weight:400;letter-spacing:0.4px;">Thunderbolt</div><svg class="a" style="left:713px;top:819.0px;" width="28" height="28" viewBox="0 0 28 28"><defs><linearGradient id="rb" x1="0" x2="1"><stop offset="0" stop-color="#e74c3c"/><stop offset="0.3" stop-color="#f1c40f"/><stop offset="0.55" stop-color="#2ecc71"/><stop offset="0.8" stop-color="#3498db"/><stop offset="1" stop-color="#9b59b6"/></linearGradient></defs>
<rect x="7" y="1.5" width="14" height="8" fill="#f1f2f3" stroke="#c5c8cb" stroke-width="0.5"/><rect x="1" y="8.5" width="26" height="14" rx="1.5" fill="#9aa0a6"/><rect x="3" y="10" width="22" height="5" fill="#41474c"/><rect x="5" y="15" width="18" height="6" fill="#e8eaeb"/><rect x="4" y="22" width="20" height="2.5" fill="url(#rb)"/></svg><div class="t" style="left:748.5px;top:825.7px;font-size:16px;color:#232629;font-weight:400;letter-spacing:0.4px;">Printers</div><div class="a" style="left:960px;top:698.5px;width:43px;height:14px;background:#e3e4e6;border:1px solid #c9cbce;border-radius:7px"></div><div class="a" style="left:958px;top:694.5px;width:22px;height:22px;background:#fcfcfc;border:1px solid #c0c2c5;border-radius:11px"></div><div class="t" style="left:713.0px;top:872.4px;font-size:16px;color:#4d5155;font-weight:700;letter-spacing:0.5px;">Networking</div><div class="a" style="left:821px;top:880px;width:183px;height:1px;background:#d4d5d7"></div><svg class="a" style="left:713px;top:907px;" width="28" height="28" viewBox="0 0 28 28"><defs><linearGradient id="glb" x1="0" y1="0" x2="0" y2="1"><stop offset="0" stop-color="#26a5e0"/><stop offset="1" stop-color="#1d7fe0"/></linearGradient></defs>
<circle cx="14" cy="14" r="12.2" fill="url(#glb)"/>
<path d="M5 8 Q8 3.5 14 2.5 L15 4 Q11 5 9 7.5 Q7 8.5 6 10 Z" fill="#7be0a0"/><path d="M5 17 Q8 14 12 15 Q15 17 14 21 Q13 25 10 25 Q6 22 5 17 Z" fill="#6fdc8f"/><path d="M22 11 Q26 10 26.2 14 Q26 18 23 18 Q20 16 22 11 Z" fill="#6fdc8f"/><path d="M3 11 L5 12.5 L4 14 Z" fill="#7be0a0"/></svg><div class="t" style="left:748.5px;top:913.4px;font-size:16px;color:#232629;font-weight:400;letter-spacing:0.4px;">Wi-Fi &amp; Internet</div><svg class="a" style="left:989px;top:913px;" width="10" height="16" viewBox="0 0 10 16"><path d="M2.5 1.5 L8.5 8 L2.5 14.5" fill="none" stroke="#77797c" stroke-width="1.5"/></svg><svg class="a" style="left:713px;top:949px;" width="28" height="28" viewBox="0 0 28 28"><defs><linearGradient id="glb" x1="0" y1="0" x2="0" y2="1"><stop offset="0" stop-color="#26a5e0"/><stop offset="1" stop-color="#1d7fe0"/></linearGradient></defs>
<circle cx="14" cy="14" r="12.2" fill="url(#glb)"/>
<path d="M5 8 Q8 3.5 14 2.5 L15 4 Q11 5 9 7.5 Q7 8.5 6 10 Z" fill="#7be0a0"/><path d="M5 17 Q8 14 12 15 Q15 17 14 21 Q13 25 10 25 Q6 22 5 17 Z" fill="#6fdc8f"/><path d="M22 11 Q26 10 26.2 14 Q26 18 23 18 Q20 16 22 11 Z" fill="#6fdc8f"/><path d="M3 11 L5 12.5 L4 14 Z" fill="#7be0a0"/><circle cx="14" cy="11" r="2.6" fill="none" stroke="#d0e8ff" stroke-width="0.9"/><path d="M9 20 Q9.5 15.5 14 15.5 Q18.5 15.5 19 20" fill="none" stroke="#d0e8ff" stroke-width="0.9"/></svg><div class="t" style="left:748.5px;top:955.9px;font-size:16px;color:#232629;font-weight:400;letter-spacing:0.4px;">Online Accounts</div><div class="a" style="left:1849px;top:214px;width:10px;height:560px;background:#d9dadb;border:1px solid #c3c5c7;border-radius:5px"></div><div class="a" style="left:1840px;top:210px;width:1px;height:703px;background:#dcdddf"></div><div class="t" style="left:1131.0px;top:231.7px;font-size:16px;color:#232629;font-weight:400;letter-spacing:0.4px;">Theme:</div><div class="t" style="left:1131.0px;top:431.4px;font-size:16px;color:#232629;font-weight:400;letter-spacing:0.4px;">More appearance settings:</div><div class="a" style="left:1132px;top:457px;width:300px;height:40px;background:#fcfcfc;border:1px solid #c6c8cb;border-radius:5px;box-shadow:0 1px 1px rgba(0,0,0,.08)"></div><svg class="a" style="left:1141px;top:467px;" width="20" height="19" viewBox="0 0 20 19"><rect x="0.5" y="0.5" width="19" height="14" fill="#2a8fa8"/><path d="M19.5 0.5 V14.5 H0.5 Z" fill="#c5407d"/><path d="M0.5 9 L7 14.5 H0.5 Z" fill="#3b4448"/><path d="M0.5 14.5 H19.5 L10 8 Z" fill="#3b4448" opacity="0.8"/><rect x="0" y="14" width="20" height="1.5" fill="#2a2e32"/><rect x="7" y="16.5" width="6" height="1.5" fill="#b0b4b8"/></svg><div class="t" style="left:1166.5px;top:469.4px;font-size:16px;color:#232629;font-weight:400;letter-spacing:0.4px;">Wallpaper</div><div class="a" style="left:1131px;top:503px;width:400px;height:1.3px;background:#c9cbce"></div><div class="t" style="left:1131.0px;top:533.3px;font-size:16px;color:#232629;font-weight:400;letter-spacing:0.4px;">Animation speed:</div><div class="a" style="left:1134px;top:566px;width:500px;height:7px;background:#dcdcee;border:1px solid #cfcfe3;border-radius:3.5px"></div><div class="a" style="left:1144px;top:575px;width:1px;height:10px;background:#cfcfe6"></div><div class="a" style="left:1181px;top:575px;width:1px;height:10px;background:#cfcfe6"></div><div class="a" style="left:1218px;top:575px;width:1px;height:10px;background:#cfcfe6"></div><div class="a" style="left:1255px;top:575px;width:1px;height:10px;background:#cfcfe6"></div><div class="a" style="left:1292px;top:575px;width:1px;height:10px;background:#cfcfe6"></div><div class="t" style="left:1131.0px;top:595.3px;font-size:16px;color:#232629;font-weight:400;letter-spacing:0.4px;">Slow</div><div class="t" style="left:1131.0px;top:649.5px;font-size:16px;color:#232629;font-weight:400;letter-spacing:0.4px;">Clicking files or folders:</div><div class="a" style="left:1133.5px;top:678.5px;width:19px;height:19px;background:#eeeef8;border:1px solid #d4d4ee;border-radius:50%"></div><div class="a" style="left:1139.5px;top:684.5px;width:7.5px;height:7.5px;background:#232629;border-radius:50%"></div><div class="t" style="left:1161.0px;top:679.5px;font-size:16px;color:#232629;font-weight:400;letter-spacing:0.4px;">Selects them</div><div class="t" style="left:1161.0px;top:704.3px;font-size:13.5px;color:#232629;font-weight:400;letter-spacing:0.3px;">Open by double-clicking instead</div><div class="a" style="left:1133.5px;top:731px;width:19px;height:19px;background:#fcfcfc;border:1px solid #c4c6c9;border-radius:50%"></div><div class="t" style="left:1161.0px;top:732.0px;font-size:16px;color:#232629;font-weight:400;letter-spacing:0.4px;">Opens them</div><div class="t" style="left:1161.0px;top:756.8px;font-size:13.5px;color:#232629;font-weight:400;letter-spacing:0.3px;">Select by clicking on item</div><div class="t" style="left:1131.5px;top:808.1px;font-size:16px;color:#232629;font-weight:400;letter-spacing:0.4px;">More behavior settings:</div><div class="a" style="left:1132.5px;top:834px;width:300px;height:40px;background:#fcfcfc;border:1px solid #c6c8cb;border-radius:5px;box-shadow:0 1px 1px rgba(0,0,0,.08)"></div><svg class="a" style="left:1142px;top:845px;" width="19" height="17" viewBox="0 0 19 17"><rect x="0" y="0" width="19" height="15" fill="#1ea9a0"/><path d="M19 0 V15 H0 Z" fill="#c23f7c"/><path d="M0 9 L7 15 H0 Z" fill="#3d474b"/><path d="M0 15 H19 L9.5 9 Z" fill="#3d474b" opacity="0.8"/><rect x="0" y="15" width="19" height="2" fill="#c7cbcf"/><path d="M5 5 H14 M5 10 H13" stroke="#fff" stroke-width="1"/></svg><div class="t" style="left:1166.5px;top:844.9px;font-size:16px;color:#232629;font-weight:400;letter-spacing:0.4px;">General Behavior</div><div class="a" style="left:1131px;top:879px;width:400px;height:1.3px;background:#c9cbce"></div><div class="clip" style="clip-path:inset(0 0 167px 0)"><div class="t" style="left:1131.0px;top:907.9px;font-size:16px;color:#232629;font-weight:400;letter-spacing:0.4px;">Most used pages</div></div><div class="a" style="left:1041px;top:913px;width:826px;height:1px;background:#c9cbce"></div><div class="a" style="left:1042px;top:914px;width:825px;height:58px;background:#eff0f1"></div><div class="a" style="left:1051px;top:922px;width:101px;height:39px;background:#edeeef;border:1px solid #dcdde0;border-radius:5px"></div><svg class="a" style="left:1071px;top:933px;" width="15" height="16" viewBox="0 0 15 16"><path d="M4 4.5 H9 A5 5 0 0 1 9 14.5 H5.5" fill="none" stroke="#a2a5a8" stroke-width="1.3"/><path d="M6.5 1 L2.8 4.5 L6.5 8" fill="none" stroke="#a2a5a8" stroke-width="1.3"/></svg><div class="t" style="left:1094.0px;top:934.4px;font-size:16px;color:#a0a3a6;font-weight:400;letter-spacing:0.4px;">Reset</div><div class="a" style="left:1696px;top:922px;width:160px;height:39px;background:#edeeef;border:1px solid #dcdde0;border-radius:5px"></div><div class="a" style="left:1130.5px;top:257px;width:211px;height:112.5px;background:#fff;border-radius:6px;box-shadow:0 1px 4px rgba(0,0,0,.18)"></div><div class="a" style="left:1130.5px;top:257px;width:180.5px;height:112.5px;background:#dcdef0;border-radius:6px 0 0 6px"></div><svg class="a" style="left:1319px;top:309px;" width="14" height="8" viewBox="0 0 14 8"><path d="M0.8 0.8 L7 7 L13.2 0.8" fill="none" stroke="#232629" stroke-width="1.4"/></svg><div class="a" style="left:1351px;top:257px;width:210px;height:112.5px;background:#fff;border-radius:6px;box-shadow:0 1px 4px rgba(0,0,0,.18)"></div><svg class="a" style="left:1539px;top:309px;" width="14" height="8" viewBox="0 0 14 8"><path d="M0.8 0.8 L7 7 L13.2 0.8" fill="none" stroke="#232629" stroke-width="1.4"/></svg><div class="a" style="left:1571px;top:256px;width:180px;height:112.5px;background:#fff;border-radius:6px;box-shadow:0 1px 4px rgba(0,0,0,.18)"></div><svg class="a" style="left:1136px;top:262px;" width="170" height="102" viewBox="0 0 170 102"><defs><linearGradient id="tglight" x1="0" y1="0" x2="1" y2="1"><stop offset="0" stop-color="#6f8cf4"/><stop offset="0.5" stop-color="#4a54c4"/><stop offset="1" stop-color="#30288e"/></linearGradient></defs><rect width="170" height="102" fill="url(#tglight)"/><g fill="#a8b4ff" opacity="0.45"><polygon points="0,8 20,0 80,0 0,45"/><polygon points="62,58 66,56 95,72 93,74"/></g><g stroke="#ffffff" opacity="0.35"><line x1="5" y1="0" x2="60" y2="40" stroke-width="0.8"/><line x1="30" y1="0" x2="85" y2="38" stroke-width="0.6"/><line x1="50" y1="0" x2="95" y2="30" stroke-width="1"/><line x1="0" y1="20" x2="70" y2="68" stroke-width="0.8"/></g><path d="M57 40 L70 33 L72 52 L62 58 L57 52 Z" fill="#f0506a"/><path d="M60 48 L70 44 L70 56 L62 58 Z" fill="#ff8a6a"/><circle cx="41" cy="25" r="1.5" fill="#e04080"/><ellipse cx="45.5" cy="38" rx="2.5" ry="3.5" fill="#e85a70" transform="rotate(-30 45.5 38)"/><rect x="70" y="9.5" width="88.80000000000001" height="53.5" fill="#fbfbfc"/><rect x="70" y="9.5" width="88.80000000000001" height="7" fill="#eceef0"/><rect x="70" y="16.5" width="14" height="46.5" fill="#f1f2f4"/><rect x="88.3" y="18.7" width="5.5" height="5.3" fill="#3daee9"/><rect x="100.5" y="18.7" width="5.5" height="5.3" fill="#3daee9"/><rect x="112.7" y="18.7" width="5.5" height="5.3" fill="#3daee9"/><rect x="124.9" y="18.7" width="5.5" height="5.3" fill="#3daee9"/><rect x="137.1" y="18.7" width="5.5" height="5.3" fill="#3daee9"/><rect x="149.3" y="18.7" width="5.5" height="5.3" fill="#3daee9"/><rect x="88.3" y="28.2" width="5.5" height="5.3" fill="#3daee9"/><rect x="100.5" y="28.2" width="5.5" height="5.3" fill="#3daee9"/><rect x="88.3" y="18.7" width="5.5" height="5.3" fill="#c8406f"/><rect x="0.7" y="48.3" width="58" height="47.5" fill="#d9dbe8"/><rect x="0.7" y="48.3" width="58" height="3" fill="#cfd1df"/><rect x="0.7" y="51.3" width="19" height="44.5" fill="#e3e4ee"/><rect x="22" y="54" width="9" height="11" fill="#b8d8f2"/><rect x="24" y="55.5" width="5" height="5" fill="#2a2e32"/><rect x="34" y="56" width="4" height="4" fill="#3daee9"/><rect x="42" y="56" width="4" height="4" fill="#3daee9"/><rect x="96.8" y="50.9" width="66.6" height="38" fill="#eff0f1"/><rect x="96.8" y="50.9" width="66.6" height="1.8" fill="#9a9ea3" opacity="0.4"/><path d="M100 66 Q104 60 108 63 Q112 68 110 76 Q107 84 102 81 Q97 74 100 66 Z" fill="#56c04a"/><rect x="106" y="70" width="3" height="3" fill="#e04040"/><rect x="99" y="55" width="3" height="4" fill="#3daee9"/><rect x="112" y="60.0" width="48" height="0.9" fill="#9a9ea3"/><rect x="112" y="63.2" width="44" height="0.9" fill="#9a9ea3"/><rect x="112" y="66.4" width="44" height="0.9" fill="#9a9ea3"/><rect x="112" y="69.6" width="48" height="0.9" fill="#9a9ea3"/><rect x="112" y="72.8" width="44" height="0.9" fill="#9a9ea3"/><rect x="112" y="76.0" width="44" height="0.9" fill="#9a9ea3"/><rect x="112" y="79.2" width="48" height="0.9" fill="#9a9ea3"/><rect x="112" y="82.4" width="44" height="0.9" fill="#9a9ea3"/><rect x="0" y="96.8" width="170" height="5.2" fill="#dcdcf0"/></svg><svg class="a" style="left:1356px;top:262px;" width="170" height="102" viewBox="0 0 170 102"><defs><linearGradient id="tgdark" x1="0" y1="0" x2="1" y2="1"><stop offset="0" stop-color="#7a3fc0"/><stop offset="0.5" stop-color="#4e2896"/><stop offset="1" stop-color="#3a1670"/></linearGradient></defs><rect width="170" height="102" fill="url(#tgdark)"/><g fill="#c090ff" opacity="0.45"><polygon points="0,8 20,0 80,0 0,45"/><polygon points="62,58 66,56 95,72 93,74"/></g><g stroke="#ffffff" opacity="0.35"><line x1="5" y1="0" x2="60" y2="40" stroke-width="0.8"/><line x1="30" y1="0" x2="85" y2="38" stroke-width="0.6"/><line x1="50" y1="0" x2="95" y2="30" stroke-width="1"/><line x1="0" y1="20" x2="70" y2="68" stroke-width="0.8"/></g><path d="M57 40 L70 33 L72 52 L62 58 L57 52 Z" fill="#f0506a"/><path d="M60 48 L70 44 L70 56 L62 58 Z" fill="#ff8a6a"/><circle cx="41" cy="25" r="1.5" fill="#e04080"/><ellipse cx="45.5" cy="38" rx="2.5" ry="3.5" fill="#e85a70" transform="rotate(-30 45.5 38)"/><rect x="70" y="9.5" width="88.80000000000001" height="53.5" fill="#1b1e20"/><rect x="70" y="9.5" width="88.80000000000001" height="7" fill="#2a2e32"/><rect x="70" y="16.5" width="14" height="46.5" fill="#232629"/><rect x="88.3" y="18.7" width="5.5" height="5.3" fill="#3daee9"/><rect x="100.5" y="18.7" width="5.5" height="5.3" fill="#3daee9"/><rect x="112.7" y="18.7" width="5.5" height="5.3" fill="#3daee9"/><rect x="124.9" y="18.7" width="5.5" height="5.3" fill="#3daee9"/><rect x="137.1" y="18.7" width="5.5" height="5.3" fill="#3daee9"/><rect x="149.3" y="18.7" width="5.5" height="5.3" fill="#3daee9"/><rect x="88.3" y="28.2" width="5.5" height="5.3" fill="#3daee9"/><rect x="100.5" y="28.2" width="5.5" height="5.3" fill="#3daee9"/><rect x="88.3" y="18.7" width="5.5" height="5.3" fill="#c8406f"/><rect x="0.7" y="48.3" width="58" height="47.5" fill="#2a2e32"/><rect x="0.7" y="48.3" width="58" height="3" fill="#31363b"/><rect x="0.7" y="51.3" width="19" height="44.5" fill="#232629"/><rect x="22" y="54" width="9" height="11" fill="#2a4a60"/><rect x="24" y="55.5" width="5" height="5" fill="#2a2e32"/><rect x="34" y="56" width="4" height="4" fill="#3daee9"/><rect x="42" y="56" width="4" height="4" fill="#3daee9"/><rect x="96.8" y="50.9" width="66.6" height="38" fill="#232629"/><rect x="96.8" y="50.9" width="66.6" height="1.8" fill="#6a6e73" opacity="0.4"/><path d="M100 66 Q104 60 108 63 Q112 68 110 76 Q107 84 102 81 Q97 74 100 66 Z" fill="#56c04a"/><rect x="106" y="70" width="3" height="3" fill="#e04040"/><rect x="99" y="55" width="3" height="4" fill="#3daee9"/><rect x="112" y="60.0" width="48" height="0.9" fill="#6a6e73"/><rect x="112" y="63.2" width="44" height="0.9" fill="#6a6e73"/><rect x="112" y="66.4" width="44" height="0.9" fill="#6a6e73"/><rect x="112" y="69.6" width="48" height="0.9" fill="#6a6e73"/><rect x="112" y="72.8" width="44" height="0.9" fill="#6a6e73"/><rect x="112" y="76.0" width="44" height="0.9" fill="#6a6e73"/><rect x="112" y="79.2" width="48" height="0.9" fill="#6a6e73"/><rect x="112" y="82.4" width="44" height="0.9" fill="#6a6e73"/><rect x="0" y="96.8" width="170" height="5.2" fill="#1e2124"/></svg><svg class="a" style="left:1576px;top:261px;" width="170" height="102" viewBox="0 0 170 102"><defs><linearGradient id="tgauto" x1="0" y1="0" x2="1" y2="1"><stop offset="0" stop-color="#6f8cf4"/><stop offset="0.5" stop-color="#4a54c4"/><stop offset="1" stop-color="#30288e"/></linearGradient></defs><rect width="170" height="102" fill="url(#tgauto)"/><g fill="#a8b4ff" opacity="0.45"><polygon points="0,8 20,0 80,0 0,45"/><polygon points="62,58 66,56 95,72 93,74"/></g><g stroke="#ffffff" opacity="0.35"><line x1="5" y1="0" x2="60" y2="40" stroke-width="0.8"/><line x1="30" y1="0" x2="85" y2="38" stroke-width="0.6"/><line x1="50" y1="0" x2="95" y2="30" stroke-width="1"/><line x1="0" y1="20" x2="70" y2="68" stroke-width="0.8"/></g><path d="M57 40 L70 33 L72 52 L62 58 L57 52 Z" fill="#f0506a"/><path d="M60 48 L70 44 L70 56 L62 58 Z" fill="#ff8a6a"/><circle cx="41" cy="25" r="1.5" fill="#e04080"/><ellipse cx="45.5" cy="38" rx="2.5" ry="3.5" fill="#e85a70" transform="rotate(-30 45.5 38)"/><defs><linearGradient id="tga2" x1="0" y1="0" x2="1" y2="1"><stop offset="0" stop-color="#7a3fc0"/><stop offset="1" stop-color="#3a1670"/></linearGradient><clipPath id="tcl"><polygon points="0,0 103,0 72,102 0,102"/></clipPath><clipPath id="tcr"><polygon points="103,0 170,0 170,102 72,102"/></clipPath></defs><g clip-path="url(#tcr)"><rect width="170" height="102" fill="url(#tga2)"/><rect x="70" y="9.5" width="88.80000000000001" height="53.5" fill="#1b1e20"/><rect x="70" y="9.5" width="88.80000000000001" height="7" fill="#2a2e32"/><rect x="70" y="16.5" width="14" height="46.5" fill="#232629"/><rect x="88.3" y="18.7" width="5.5" height="5.3" fill="#3daee9"/><rect x="100.5" y="18.7" width="5.5" height="5.3" fill="#3daee9"/><rect x="112.7" y="18.7" width="5.5" height="5.3" fill="#3daee9"/><rect x="124.9" y="18.7" width="5.5" height="5.3" fill="#3daee9"/><rect x="137.1" y="18.7" width="5.5" height="5.3" fill="#3daee9"/><rect x="149.3" y="18.7" width="5.5" height="5.3" fill="#3daee9"/><rect x="88.3" y="28.2" width="5.5" height="5.3" fill="#3daee9"/><rect x="100.5" y="28.2" width="5.5" height="5.3" fill="#3daee9"/><rect x="88.3" y="18.7" width="5.5" height="5.3" fill="#c8406f"/><rect x="96.8" y="50.9" width="66.6" height="38" fill="#232629"/><rect x="96.8" y="50.9" width="66.6" height="1.8" fill="#6a6e73" opacity="0.4"/><path d="M100 66 Q104 60 108 63 Q112 68 110 76 Q107 84 102 81 Q97 74 100 66 Z" fill="#56c04a"/><rect x="106" y="70" width="3" height="3" fill="#e04040"/><rect x="99" y="55" width="3" height="4" fill="#3daee9"/><rect x="112" y="60.0" width="48" height="0.9" fill="#6a6e73"/><rect x="112" y="63.2" width="44" height="0.9" fill="#6a6e73"/><rect x="112" y="66.4" width="44" height="0.9" fill="#6a6e73"/><rect x="112" y="69.6" width="48" height="0.9" fill="#6a6e73"/><rect x="112" y="72.8" width="44" height="0.9" fill="#6a6e73"/><rect x="112" y="76.0" width="44" height="0.9" fill="#6a6e73"/><rect x="112" y="79.2" width="48" height="0.9" fill="#6a6e73"/><rect x="112" y="82.4" width="44" height="0.9" fill="#6a6e73"/><rect x="0" y="96.8" width="170" height="5.2" fill="#1e2124"/></g><g clip-path="url(#tcl)"><rect x="70" y="9.5" width="88.80000000000001" height="53.5" fill="#fbfbfc"/><rect x="70" y="9.5" width="88.80000000000001" height="7" fill="#eceef0"/><rect x="70" y="16.5" width="14" height="46.5" fill="#f1f2f4"/><rect x="88.3" y="18.7" width="5.5" height="5.3" fill="#3daee9"/><rect x="100.5" y="18.7" width="5.5" height="5.3" fill="#3daee9"/><rect x="112.7" y="18.7" width="5.5" height="5.3" fill="#3daee9"/><rect x="124.9" y="18.7" width="5.5" height="5.3" fill="#3daee9"/><rect x="137.1" y="18.7" width="5.5" height="5.3" fill="#3daee9"/><rect x="149.3" y="18.7" width="5.5" height="5.3" fill="#3daee9"/><rect x="88.3" y="28.2" width="5.5" height="5.3" fill="#3daee9"/><rect x="100.5" y="28.2" width="5.5" height="5.3" fill="#3daee9"/><rect x="88.3" y="18.7" width="5.5" height="5.3" fill="#c8406f"/><rect x="0" y="96.8" width="170" height="5.2" fill="#dcdcf0"/></g><rect x="0.7" y="48.3" width="58" height="47.5" fill="#d9dbe8"/><rect x="0.7" y="48.3" width="58" height="3" fill="#cfd1df"/><rect x="0.7" y="51.3" width="19" height="44.5" fill="#e3e4ee"/><rect x="22" y="54" width="9" height="11" fill="#b8d8f2"/><rect x="24" y="55.5" width="5" height="5" fill="#2a2e32"/><rect x="34" y="56" width="4" height="4" fill="#3daee9"/><rect x="42" y="56" width="4" height="4" fill="#3daee9"/><circle cx="153" cy="17" r="8.5" fill="#fff"/><circle cx="153" cy="17" r="7" fill="#2a2e32"/><path d="M148 22 L158 12 A7 7 0 0 1 148 22 Z" fill="#fff"/></svg><div class="t" style="left:736.0px;width:1000px;text-align:center;top:377.4px;font-size:16px;color:#232629;font-weight:400;letter-spacing:0.4px;">Breeze</div><div class="t" style="left:956.0px;width:1000px;text-align:center;top:377.5px;font-size:16px;color:#232629;font-weight:400;letter-spacing:0.4px;">Breeze Dark</div><div class="t" style="left:1160.5px;width:1000px;text-align:center;top:376.2px;font-size:16px;color:#232629;font-weight:400;letter-spacing:0.4px;">Automatic</div></div>
<div class="a" style="left:1295px;top:455px;width:550px;height:549px;border-radius:7px;box-shadow:0 2px 12px rgba(0,0,0,.3);background:linear-gradient(180deg,#e2e2e5 0%,#e1e1e6 50%,#e0dfeb 100%)"></div><div class="a" style="left:1295px;top:455px;width:550px;height:46px;border-radius:7px 7px 0 0;background:#e0e1e3"></div><div class="a" style="left:1295px;top:501px;width:550px;height:1px;background:#c5c7ca"></div><div class="t" style="left:1310.5px;top:468.1px;font-size:23px;color:#232629;font-weight:400;letter-spacing:0.35px;">Status and Notifications</div><svg class="a" style="left:1766px;top:468px;" width="22" height="22" viewBox="0 0 22 22"><path d="M1 5 H21 M7 17 H21" stroke="#232629" stroke-width="1.4"/><circle cx="11" cy="5" r="2.8" fill="#232629"/><circle cx="4" cy="17" r="2.6" fill="#e0e1e3" stroke="#232629" stroke-width="1.2"/></svg><svg class="a" style="left:1812px;top:469px;" width="20" height="20" viewBox="0 0 20 20"><path d="M19 6 L13.5 0.8 L8.5 6.5 L5.8 5.6 L4.4 7 L12.8 15.4 L14.2 14 L13.3 11.3 Z M7.8 12 L0.8 19" fill="#232629" stroke="#232629" stroke-width="1.5" stroke-linejoin="round"/></svg><svg class="a" style="left:1305px;top:517px;" width="40" height="34" viewBox="0 0 40 34"><rect x="0.5" y="1" width="39" height="32" fill="#fff" stroke="#dfe1e3" stroke-width="0.6"/><rect x="0" y="0" width="40" height="4" fill="#4d555b"/><rect x="0" y="4" width="40" height="1.6" fill="#3daee9"/><rect x="35" y="1" width="2.5" height="2" fill="#fff"/>
<path d="M28 11 L39 22 V33 H22 Z" fill="#eceeef"/>
<rect x="10" y="11" width="19" height="14" fill="none" stroke="#232629" stroke-width="1.4"/><path d="M19.5 25 V28.5 M14 29 H25" stroke="#232629" stroke-width="1.6"/>
<path d="M11.5 18 Q19.5 9 27.5 18 Q19.5 26 11.5 18 Z" fill="none" stroke="#232629" stroke-width="1.1"/><circle cx="19.5" cy="17.5" r="3.6" fill="none" stroke="#232629" stroke-width="1.2"/><path d="M19.5 15.5 V17.5 H21.5" stroke="#232629" stroke-width="0.9" fill="none"/></svg><div class="t" style="left:1350.5px;top:528.0px;font-size:16px;color:#232629;font-weight:400;letter-spacing:0.4px;">RDP Server</div><svg class="a" style="left:1309px;top:573px;" width="31" height="31" viewBox="0 0 31 31"><path d="M0.5 0.5 H9.5 L13 4 H30.5 V30.5 H0.5 Z" fill="#232629"/><path d="M0.5 0.5 H9.5 L13 4 H0.5 Z" fill="#e1e1e5" opacity="0"/><rect x="13" y="16" width="16" height="14" rx="1" fill="#e8e8ea" stroke="#232629" stroke-width="1.3"/><path d="M16.5 16 V12 A4.5 4.5 0 0 1 25.5 12 V16" fill="none" stroke="#e8e8ea" stroke-width="1.6"/><path d="M0.5 0.5 L9 0.5 L12 3.5" fill="none" stroke="#e1e1e5" stroke-width="0"/></svg><div class="t" style="left:1350.5px;top:582.0px;font-size:16px;color:#232629;font-weight:400;letter-spacing:0.4px;">Vaults</div><svg class="a" style="left:1316px;top:629px;" width="18" height="28" viewBox="0 0 18 28"><path d="M2 8 L15 20.5 L8.5 27 V1 L15 7.5 L2 20" fill="none" stroke="#7c7f83" stroke-width="1.6"/></svg><div class="t" style="left:1350.5px;top:635.8px;font-size:16px;color:#232629;font-weight:400;letter-spacing:0.4px;">Bluetooth</div><svg class="a" style="left:1309px;top:682px;" width="29" height="28" viewBox="0 0 29 28"><rect x="0.8" y="0.8" width="27.4" height="19.4" fill="none" stroke="#232629" stroke-width="1.6"/><path d="M14.5 20 V24.5 M8 25.5 H21" stroke="#232629" stroke-width="2"/><path d="M26 3 V11 L18 3 Z M3 18 V10 L11 18 Z" fill="#232629"/></svg><div class="t" style="left:1350.5px;top:689.6px;font-size:16px;color:#232629;font-weight:400;letter-spacing:0.4px;">Display Configuration</div><svg class="a" style="left:1309px;top:735px;" width="31" height="30" viewBox="0 0 31 30"><rect x="6.5" y="0.8" width="18" height="9" fill="none" stroke="#232629" stroke-width="1.4"/><path d="M9 4 H22 M9 6.5 H22" stroke="#232629" stroke-width="1"/><rect x="0.8" y="10" width="29.4" height="13" fill="none" stroke="#232629" stroke-width="1.5"/><rect x="4" y="18" width="23" height="5" fill="#232629"/><rect x="6.5" y="23" width="18" height="6.5" fill="none" stroke="#232629" stroke-width="1.4"/><path d="M24 13 H28" stroke="#232629" stroke-width="1.2"/></svg><div class="t" style="left:1350.5px;top:743.4px;font-size:16px;color:#232629;font-weight:400;letter-spacing:0.4px;">Printers</div><svg class="a" style="left:1578px;top:520px;" width="34" height="31" viewBox="0 0 34 31"><circle cx="4" cy="3" r="2.9" fill="#22cc22"/><g transform="translate(0 1)"><rect x="0.8" y="8.8" width="32" height="20.2" fill="none" stroke="#232629" stroke-width="1.5"/><path d="M1 10.6 H32.6 M1 13 H32.6" stroke="#232629" stroke-width="1"/><rect x="1.5" y="11.1" width="30.6" height="1.4" fill="#bfc0c4"/><rect x="3.2" y="15" width="2.2" height="1.8" fill="#232629"/><rect x="6.5" y="15" width="2.2" height="1.8" fill="#232629"/><rect x="9.8" y="15" width="2.2" height="1.8" fill="#232629"/><rect x="13.1" y="15" width="2.2" height="1.8" fill="#232629"/><rect x="16.4" y="15" width="2.2" height="1.8" fill="#232629"/><rect x="19.7" y="15" width="2.2" height="1.8" fill="#232629"/><rect x="23.0" y="15" width="2.2" height="1.8" fill="#232629"/><rect x="26.3" y="15" width="2.2" height="1.8" fill="#232629"/><rect x="29.6" y="15" width="2.2" height="1.8" fill="#232629"/><rect x="3.2" y="18.5" width="2.2" height="1.8" fill="#232629"/><rect x="6.5" y="18.5" width="2.2" height="1.8" fill="#232629"/><rect x="9.8" y="18.5" width="2.2" height="1.8" fill="#232629"/><rect x="13.1" y="18.5" width="2.2" height="1.8" fill="#232629"/><rect x="16.4" y="18.5" width="2.2" height="1.8" fill="#232629"/><rect x="19.7" y="18.5" width="2.2" height="1.8" fill="#232629"/><rect x="23.0" y="18.5" width="2.2" height="1.8" fill="#232629"/><rect x="26.3" y="18.5" width="2.2" height="1.8" fill="#232629"/><rect x="29.6" y="18.5" width="2.2" height="1.8" fill="#232629"/><rect x="3.2" y="22" width="2.2" height="1.8" fill="#232629"/><rect x="6.5" y="22" width="2.2" height="1.8" fill="#232629"/><rect x="26.3" y="22" width="2.2" height="1.8" fill="#232629"/><rect x="29.6" y="22" width="2.2" height="1.8" fill="#232629"/><rect x="10" y="22" width="13.5" height="1.8" fill="#232629"/></g></svg><div class="t" style="left:1620.0px;top:528.0px;font-size:16px;color:#232629;font-weight:400;letter-spacing:0.4px;">Input Method</div><svg class="a" style="left:1580px;top:575px;" width="33" height="28" viewBox="0 0 33 28"><path d="M1.6 13.7 H5.3 M11.3 1.2 L12.7 5.4 M18.7 1.2 L17.8 5.4 M4.4 5.8 L7.6 8.6 M25.6 6.3 L22.9 9" stroke="#232629" stroke-width="1.3"/><path d="M8 19 A7.6 7.6 0 0 1 21 10" fill="none" stroke="#232629" stroke-width="1.4"/><path d="M10.5 18.5 A5.5 5.5 0 0 1 17 10.5" fill="none" stroke="#232629" stroke-width="1"/><path d="M8 26.7 C4.5 26.7 4 22 7 20.5 C7.5 15 12 13 15 14 C17 9.5 24 9 27 14 C29 13.5 31.5 16 31 19 C33 21 32.5 26.7 28.5 26.7 Z" fill="#e1e1e5" stroke="#232629" stroke-width="1.4"/></svg><div class="t" style="left:1620.0px;top:582.0px;font-size:16px;color:#232629;font-weight:400;letter-spacing:0.4px;">Set up Weather Report…</div><svg class="a" style="left:1582px;top:624px;" width="25" height="37" viewBox="0 0 25 37"><rect x="4" y="0.8" width="17" height="15" fill="#232629"/><path d="M8 4 V12 M11 6 V12 M14 3 V12 M17 5 V12" stroke="#e1e1e5" stroke-width="1.5"/><rect x="0.8" y="16" width="23.4" height="20" rx="1" fill="#f3f3f5" stroke="#232629" stroke-width="1.5"/><path d="M5 29 H20 M5 32 H20" stroke="#232629" stroke-width="1.2"/><path d="M11 22 L12.5 20 L14 22 Z" fill="#232629"/></svg><div class="t" style="left:1620.0px;top:635.8px;font-size:16px;color:#232629;font-weight:400;letter-spacing:0.4px;">Disks &amp; Devices</div><svg class="a" style="left:1578px;top:688px;" width="34" height="17" viewBox="0 0 34 17"><rect x="0.8" y="0.8" width="30" height="15.4" fill="none" stroke="#232629" stroke-width="1.6"/><rect x="3" y="3" width="26" height="11" fill="#232629"/><rect x="31" y="4.5" width="2.5" height="8" fill="#232629"/><path d="M18.5 5.5 L13.5 8.5 L18.5 11.5 Z" fill="#2ecc40"/><path d="M18 8.5 H22" stroke="#2ecc40" stroke-width="1.5"/></svg><div class="t" style="left:1620.0px;top:689.6px;font-size:16px;color:#232629;font-weight:400;letter-spacing:0.4px;">Power and Battery</div>
<div class="a" style="left:10px;top:1015px;width:1900px;height:54.5px;border-radius:6px;background:linear-gradient(90deg,#d8dcf2 0%,#dadaf1 50%,#dedaf0 100%);box-shadow:0 0 6px rgba(0,0,0,.15)"></div><svg class="a" style="left:26px;top:1026px;" width="34" height="32" viewBox="0 0 34 32"><circle cx="9.5" cy="4.4" r="1.9" fill="#232629"/><circle cx="5.1" cy="15.8" r="2.8" fill="#232629"/><circle cx="13.2" cy="27.7" r="3.5" fill="#232629"/><path d="M20 4 L28.5 11.8 L20 19.6" fill="none" stroke="#232629" stroke-width="3.6"/></svg><div class="a" style="left:71px;top:1020px;width:37.5px;height:21px;background:#a9aeea;border:1px solid #9aa0e4"></div><div class="a" style="left:109.5px;top:1020px;width:37.5px;height:21px;background:#c6cbe0"></div><div class="a" style="left:71px;top:1042px;width:37.5px;height:22px;background:#c6cbe0"></div><div class="a" style="left:109.5px;top:1042px;width:37.5px;height:22px;background:#c6cbe0"></div><div class="a" style="left:72px;top:1021px;width:19px;height:14.5px;background:#8e94d6;border:1px solid #8088c8"></div><div class="a" style="left:85px;top:1022px;width:22px;height:16.5px;background:#8e94d6;border:1px solid #7a82c4;opacity:.95"></div><div class="a" style="left:155px;top:1015px;width:62.5px;height:54.5px;background:#c5c9dc"></div><div class="a" style="left:155px;top:1015.5px;width:62.5px;height:3px;background:#a5a8b6"></div><div class="a" style="left:415.3px;top:1015px;width:62.30000000000001px;height:54.5px;background:#c5c9dc"></div><div class="a" style="left:415.3px;top:1015.5px;width:62.30000000000001px;height:3px;background:#a5a8b6"></div><svg class="a" style="left:170px;top:1026px;" width="34" height="34" viewBox="0 0 34 34"><defs><linearGradient id="tsa" x1="0" y1="0" x2="1" y2="1"><stop offset="0" stop-color="#44484d"/><stop offset="1" stop-color="#1f2225"/></linearGradient></defs>
<rect x="0" y="0" width="34" height="34" rx="2" fill="url(#tsa)"/>
<path d="M4 12.5 H29" stroke="#4a4e52" stroke-width="1.3"/><path d="M4 12.5 H23" stroke="#b4b6f0" stroke-width="1.6"/><path d="M4 21 H29" stroke="#4a4e52" stroke-width="1.3"/><path d="M4 21 H14" stroke="#b4b6f0" stroke-width="1.6"/>
<circle cx="23.5" cy="12.5" r="2.6" fill="#fff"/><circle cx="13.5" cy="21" r="2.6" fill="#fff"/></svg><svg class="a" style="left:232px;top:1023px;" width="40" height="40" viewBox="0 0 40 40"><defs><linearGradient id="ghr" x1="0" y1="0" x2="1" y2="1"><stop offset="0" stop-color="#e04a46"/><stop offset="0.6" stop-color="#cc3a36"/><stop offset="1" stop-color="#9a1c1c"/></linearGradient>
<radialGradient id="ghw" cx="0.4" cy="0.3" r="0.8"><stop offset="0" stop-color="#ffffff"/><stop offset="0.7" stop-color="#ececec"/><stop offset="1" stop-color="#cfcfcf"/></radialGradient></defs>
<rect x="0" y="0" width="40" height="40" rx="5" fill="url(#ghr)"/>
<path d="M20 2.5 Q32 2.5 35 10 L35.5 12 Q38.5 12 38.5 15 Q38.5 18 35.5 18.5 Q35.5 26 34.5 30 Q34 34 37 35.5 Q33 37 28 36 Q24 37.5 20 37.5 Q7 37.5 5 26 Q4.5 22 4.5 18.5 Q1.5 18.5 1.5 15 Q1.5 12 4.5 12 Q7 2.5 20 2.5 Z" fill="url(#ghw)"/>
<ellipse cx="14.5" cy="14.8" rx="4.2" ry="5.6" fill="#141414"/><ellipse cx="25.3" cy="14.8" rx="4.2" ry="5.6" fill="#141414"/></svg><svg class="a" style="left:299px;top:1026px;" width="36" height="34" viewBox="0 0 36 34"><path d="M0 2 Q0 0 2 0 H13 L16 2 H34 Q36 2 36 4 V32 Q36 34 34 34 H2 Q0 34 0 32 Z" fill="#9a9ed6"/>
<rect x="2" y="5" width="32" height="9" fill="#f6f6fb"/><path d="M0 12 H36 V32 Q36 34 34 34 H2 Q0 34 0 32 Z" fill="#a9ade6"/>
<path d="M5 34 Q12 22 22 19 Q28 17 31 18 Q27 22 28 28 L30 34 Z" fill="#c7caf0" opacity="0.9"/><circle cx="18" cy="27" r="0.7" fill="#6a6eb0"/></svg><svg class="a" style="left:363px;top:1023px;" width="38" height="38" viewBox="0 0 72 72"><defs>
<radialGradient id="ffo2" cx="48" cy="4" r="75" gradientUnits="userSpaceOnUse"><stop offset="0" stop-color="#fff44f"/><stop offset="0.28" stop-color="#ffc442"/><stop offset="0.45" stop-color="#ff8f2a"/><stop offset="0.65" stop-color="#ff4f3c"/><stop offset="0.82" stop-color="#ff3050"/><stop offset="1" stop-color="#e3107a"/></radialGradient>
<radialGradient id="ffp2" cx="38" cy="30" r="22" gradientUnits="userSpaceOnUse"><stop offset="0" stop-color="#9a5cff"/><stop offset="0.55" stop-color="#7b45e8"/><stop offset="1" stop-color="#5a2fc0"/></radialGradient>
<linearGradient id="fff2" x1="0" y1="0" x2="0" y2="1"><stop offset="0" stop-color="#ffb13a"/><stop offset="1" stop-color="#ff9a1f"/></linearGradient>
</defs>
<path d="M14.7 11.3 L15.8 19.8 L24.4 13.6 L24.8 21.8 C28 19 32 18 35.3 18 C35 11 40 4 47 0 C50 7 57 12 62.5 15.2 L63.5 17 C69 24 71.6 32 71.4 40 C70.8 58 55 71.5 36.5 71.5 C16 71.5 1.4 56 1.4 38 C1.4 27 6.5 17 14.7 11.3 Z" fill="url(#ffo2)"/>
<ellipse cx="35.8" cy="36" rx="15.6" ry="17" fill="url(#ffp2)"/>
<path d="M48.5 27 C56 32 57 46 47.5 55.5 C53 45 53 34 48.5 27 Z" fill="#ffb341" opacity="0.55"/>
<path d="M44 25.5 C47 24 51 25 52.5 27.5 C50 27 48 27.5 46.5 29 Z" fill="#ffd04a" opacity="0.7"/>
<path d="M10.4 30.3 C15 26.5 24 25.5 30 27.5 C33 28.5 35 29.5 36.6 30.3 C34 33 30.5 33.6 27 34.6 C22 37 20.5 43 22.5 47.5 C16.5 42 13.5 36 10.4 30.3 Z" fill="url(#fff2)"/></svg><svg class="a" style="left:431.5px;top:1026px;" width="31" height="34" viewBox="0 0 20 22"><defs><linearGradient id="dg" x1="0" y1="0" x2="0" y2="1"><stop offset="0" stop-color="#1ec0f5"/><stop offset="1" stop-color="#1a7ee8"/></linearGradient></defs>
<path d="M6 6 V3.5 A4 3 0 0 1 14 3.5 V6" fill="none" stroke="#3db4f0" stroke-width="1"/>
<path d="M2.5 4.5 H17.5 L19 7 H1 Z" fill="#1d4e6e"/>
<rect x="1" y="7" width="18" height="14.5" fill="url(#dg)"/><rect x="1" y="20.5" width="18" height="1" fill="#1565c0"/>
<path d="M10.5 11 L13 13.5 L10.5 16" fill="none" stroke="#d8f0ff" stroke-width="1.4"/><circle cx="7.5" cy="11" r="0.9" fill="#d8f0ff"/><circle cx="5.5" cy="14.5" r="0.8" fill="#d8f0ff"/><circle cx="7.5" cy="17.5" r="0.9" fill="#d8f0ff"/></svg><svg class="a" style="left:495px;top:1026px;" width="34" height="34" viewBox="0 0 34 34"><defs><linearGradient id="itb" x1="0" y1="0" x2="1" y2="1"><stop offset="0" stop-color="#0fd0ff"/><stop offset="1" stop-color="#2a6ef0"/></linearGradient>
<linearGradient id="itw" x1="0" y1="0" x2="1" y2="1"><stop offset="0" stop-color="#ffffff"/><stop offset="1" stop-color="#b4b4b4"/></linearGradient></defs>
<circle cx="17" cy="17" r="16.8" fill="url(#itb)"/>
<path d="M5.4 7.8 C9 5.5 15 3.5 20.5 4.2 C19 6 17 8 16 10 C13 9.5 9 8.5 5.4 7.8 Z" fill="url(#itw)"/>
<path d="M7.5 17 C7 13 11 11 16 10.5 C21 10 25 8 28.3 6 C26 10 21 13 17 14.5 C13 15.5 10.5 17 9.5 20 C8 19.5 7.5 18.5 7.5 17 Z" fill="url(#itw)"/>
<path d="M14.5 15.5 L19.5 15 L29.2 22.8 L20.5 21 L22 30.7 Q17 25 11 20.5 Z" fill="url(#itw)"/>
<circle cx="19.5" cy="7.3" r="2.8" fill="#1a78ee"/><circle cx="12.5" cy="18.5" r="3.4" fill="#1a78ee"/></svg><div class="a" style="left:1379px;top:1015px;width:382px;height:4px;background:#868cd6"></div><svg class="a" style="left:1396px;top:1032px;" width="21" height="22" viewBox="0 0 21 22"><path d="M4 16.5 Q6 14 6 9.5 Q6 4 10.5 3.5 Q15 4 15 9.5 Q15 14 17 16.5 Z" fill="none" stroke="#232629" stroke-width="1.5" stroke-linejoin="round"/><path d="M8.5 18 Q10.5 21.5 12.5 18 Z" fill="#232629"/><circle cx="10.5" cy="2.5" r="1" fill="#232629"/><path d="M3 3 Q1 5.5 1 9 M5 4.5 Q3.5 6.5 3.5 9 M18 3 Q20 5.5 20 9 M16 4.5 Q17.5 6.5 17.5 9" fill="none" stroke="#232629" stroke-width="1.1"/></svg><svg class="a" style="left:1434px;top:1033px;" width="20" height="20" viewBox="0 0 20 20"><circle cx="10" cy="5.5" r="4.6" fill="none" stroke="#232629" stroke-width="1.4"/><path d="M0.8 19.8 Q1.5 11.5 10 11.5 Q18.5 11.5 19.2 19.8" fill="none" stroke="#232629" stroke-width="1.4"/></svg><svg class="a" style="left:1469px;top:1033px;" width="25" height="22" viewBox="0 0 25 22"><path d="M6 17.5 Q1 17.5 1 13.5 Q1 9.5 5.5 9.5 Q6.5 2 12.5 2 Q18.5 2 19.5 9 Q23 9.5 23 13" fill="none" stroke="#4d5155" stroke-width="1.4"/><path d="M6 17.5 H13" stroke="#4d5155" stroke-width="1.4"/><circle cx="18.8" cy="16.2" r="5.2" fill="#2ebd59"/><path d="M16 16.3 L18.2 18.4 L21.8 14.2" fill="none" stroke="#fff" stroke-width="1.5"/></svg><svg class="a" style="left:1510px;top:1032px;" width="19" height="22" viewBox="0 0 19 22"><rect x="0.8" y="3.5" width="17.4" height="17.7" fill="none" stroke="#232629" stroke-width="1.5"/><rect x="4" y="0.5" width="11" height="5.5" fill="#232629"/><path d="M4 10 H15 M4 13 H12 M4 16 H9" stroke="#232629" stroke-width="1.3"/></svg><svg class="a" style="left:1546px;top:1032px;" width="21" height="22" viewBox="0 0 21 22"><circle cx="10.5" cy="11" r="9.6" fill="none" stroke="#232629" stroke-width="1.4"/><rect x="7.2" y="7.3" width="2.3" height="7.5" fill="#232629"/><rect x="11.5" y="7.3" width="2.3" height="7.5" fill="#232629"/></svg><svg class="a" style="left:1583px;top:1032px;" width="22" height="22" viewBox="0 0 22 22"><rect x="0.5" y="7.5" width="3" height="7" fill="#232629"/><path d="M3.5 7.5 L10 1.5 V20.5 L3.5 14.5 Z" fill="#232629"/><path d="M14 7 Q16 11 14 15 M16.5 4.5 Q20.5 11 16.5 17.5" fill="none" stroke="#e0303b" stroke-width="1.3"/></svg><svg class="a" style="left:1620px;top:1032px;" width="22" height="22" viewBox="0 0 22 22"><circle cx="11" cy="11" r="5" fill="none" stroke="#232629" stroke-width="1.5"/><path d="M11 6 A5 5 0 0 1 11 16 Z" fill="#232629"/><path d="M11 0.5 V3.5 M11 18.5 V21.5 M0.5 11 H3.5 M18.5 11 H21.5 M3.5 3.5 L5.6 5.6 M16.4 16.4 L18.5 18.5 M3.5 18.5 L5.6 16.4 M16.4 5.6 L18.5 3.5" stroke="#232629" stroke-width="1.5"/></svg><div class="a" style="left:1654.5px;top:1029px;width:28px;height:28px;background:#d5d5ea;border-radius:3px"></div><svg class="a" style="left:1661px;top:1033px;" width="16" height="20" viewBox="0 0 16 20"><rect x="0.7" y="0.7" width="14.6" height="18.6" fill="none" stroke="#232629" stroke-width="1.4"/><rect x="2.5" y="2.5" width="11" height="15" fill="#232629"/><path d="M5.5 6 V14 M10.5 6 L6 10 L10.5 14" fill="none" stroke="#fff" stroke-width="1.6"/></svg><svg class="a" style="left:1692px;top:1032px;" width="28" height="22" viewBox="0 0 28 22"><path d="M1.5 8 Q14 -2 26.5 8 M5.5 11.5 Q14 4 22.5 11.5 M9.5 15 Q14 11 18.5 15" fill="none" stroke="#a3a5b0" stroke-width="1.3"/><circle cx="14" cy="19" r="1.8" fill="none" stroke="#5b5f63" stroke-width="1.3"/></svg><svg class="a" style="left:1731px;top:1037px;" width="21" height="12" viewBox="0 0 21 12"><path d="M1 1 L10.5 10.5 L20 1" fill="none" stroke="#232629" stroke-width="1.5"/></svg><div class="t" style="left:1308.0px;width:1000px;text-align:center;top:1024.8px;font-size:20px;color:#232629;font-weight:400;">23:37</div><div class="t" style="left:1307.0px;width:1000px;text-align:center;top:1044.5px;font-size:16px;color:#232629;font-weight:400;letter-spacing:0.4px;">2025-10-16</div><svg class="a" style="left:1870px;top:1033px;" width="20" height="20" viewBox="0 0 20 20"><rect x="0.7" y="0.7" width="18.6" height="18.6" fill="none" stroke="#232629" stroke-width="1.4"/><rect x="2" y="15.5" width="16" height="1.6" fill="#5b5f63"/></svg>
</body></html>
